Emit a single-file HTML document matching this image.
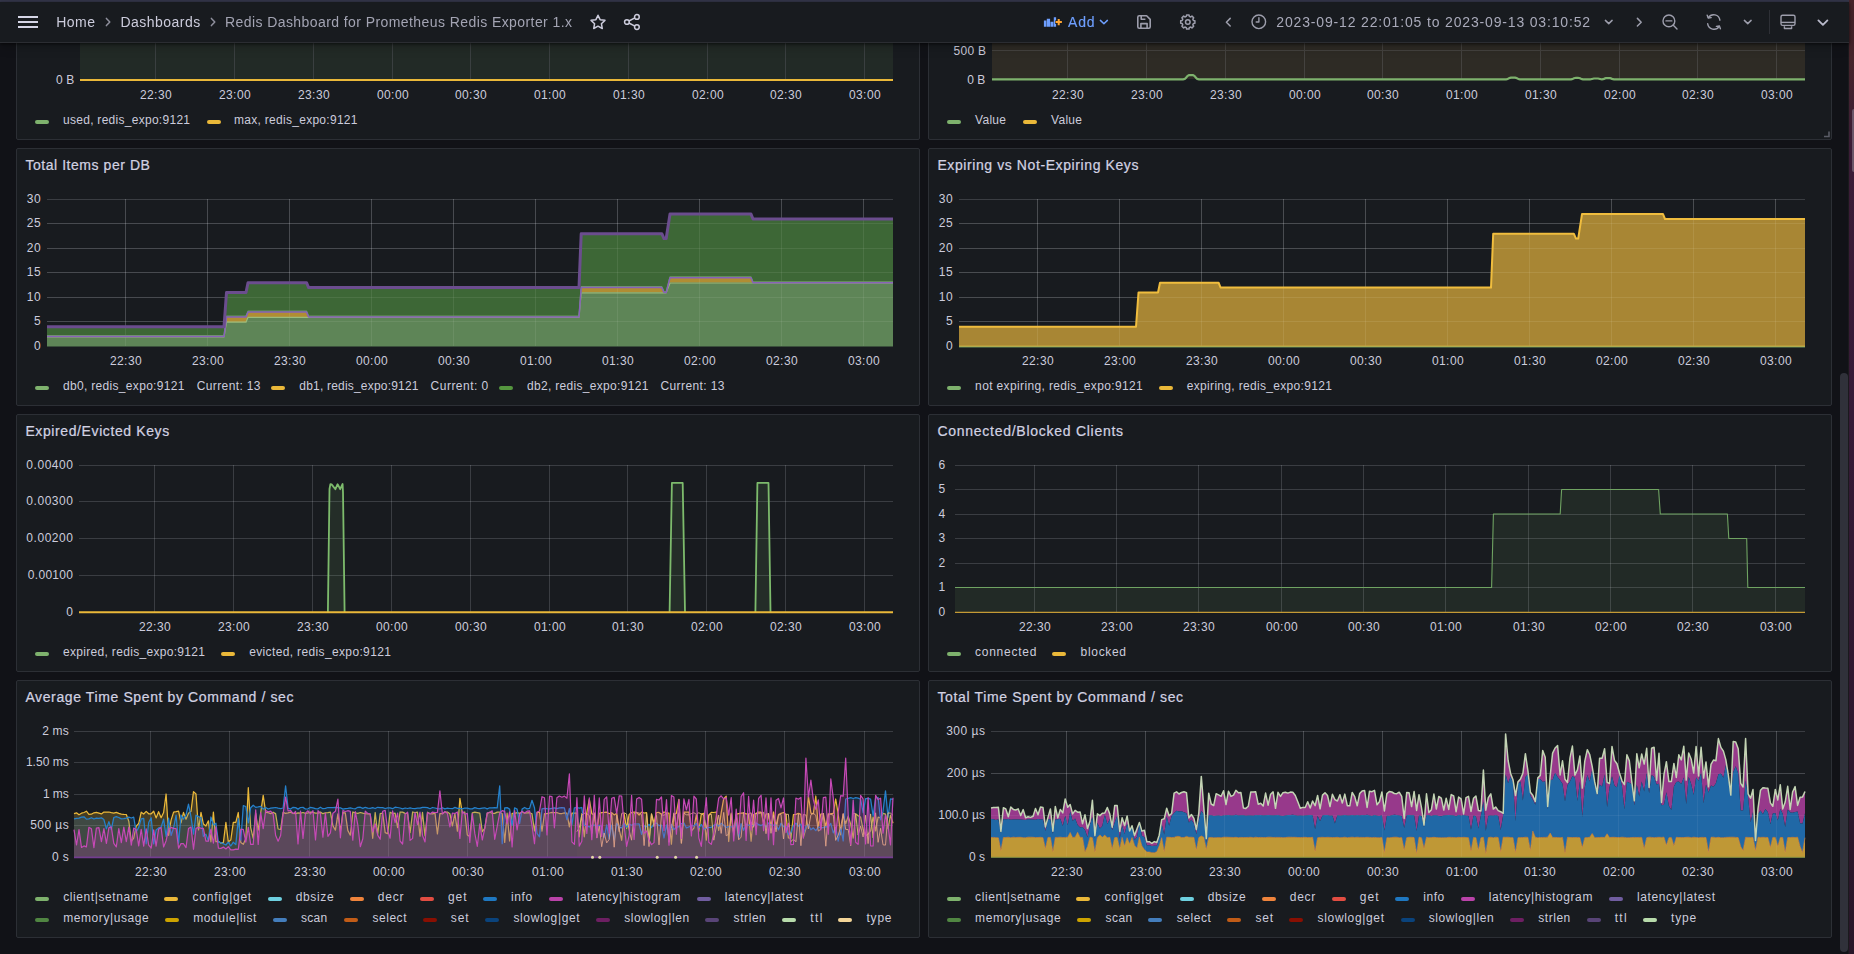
<!DOCTYPE html>
<html lang="en">
<head>
<meta charset="utf-8">
<title>Redis Dashboard for Prometheus Redis Exporter 1.x - Dashboards - Grafana</title>
<style>
html,body{margin:0;padding:0;}
body{width:1854px;height:954px;overflow:hidden;background:#111217;position:relative;
 font-family:"Liberation Sans",sans-serif;color:#ccccdc;}
.t{position:absolute;white-space:pre;font-family:"Liberation Sans",sans-serif;font-weight:400;}
.m{-webkit-text-stroke:0.22px currentColor;}
.m2{-webkit-text-stroke:0.15px currentColor;}
#wintop{position:absolute;left:0;top:0;width:1849px;height:2px;background:#34364a;}
#winright{position:absolute;left:1849px;top:0;width:5px;height:954px;
 background:linear-gradient(#46242a 0px,#45242b 60px,#3b1c37 150px,#351a36 420px,#281628 954px);}
#winline{position:absolute;left:1848px;top:43px;width:1px;height:911px;background:#1a1a1d;}
#winthumb{position:absolute;left:1851.5px;top:109px;width:3px;height:63px;border-radius:2px 0 0 2px;background:#6a5568;}
header{will-change:transform;position:absolute;left:0;top:2px;width:1849px;height:40px;background:#181b1f;border-bottom:1px solid #2b2d32;
 box-shadow:0 1px 3px rgba(0,0,0,.6),0 4px 10px rgba(0,0,0,.22);z-index:5;}
header svg{position:absolute;overflow:visible;}
main{background:#111217;position:absolute;left:0;top:43px;width:1849px;height:911px;overflow:hidden;}
.panel{position:absolute;box-sizing:border-box;width:904px;height:258px;background:#181b1f;border:1px solid #2c2f35;border-radius:2px;}
.panel>svg{position:absolute;left:-1px;top:-1px;width:904px;height:258px;}
.panel h2{margin:0;font-weight:400;}
.lg{position:absolute;height:4px;width:14px;border-radius:2px;}
#gscroll{position:absolute;left:1840px;top:330px;width:8px;height:579px;border-radius:4px;background:#30313a;}
</style>
</head>
<body>
<div id="wintop"></div>

<header>
<svg style="left:18px;top:14px" width="20" height="12" viewBox="0 0 20 12"><path d="M0 1h20M0 6h20M0 11h20" stroke="#d5d5e6" stroke-width="2" fill="none"/></svg>
<span class="t " style="left:56.20px;top:13.00px;font-size:14px;line-height:14px;letter-spacing:0.486px;color:#ccccdc;">Home</span>
<span class="t " style="left:120.40px;top:13.00px;font-size:14px;line-height:14px;letter-spacing:0.480px;color:#ccccdc;">Dashboards</span>
<span class="t " style="left:225.00px;top:13.00px;font-size:14px;line-height:14px;letter-spacing:0.421px;color:#a3a4b3;">Redis Dashboard for Prometheus Redis Exporter 1.x</span>
<svg style="left:105.5px;top:16.0px" width="4.2" height="8" viewBox="0 0 4.2 8"><path d="M0.4 0.4 L3.8000000000000003 4.0 L0.4 7.6" stroke="#8e8f9c" stroke-width="1.5" fill="none" stroke-linecap="round" stroke-linejoin="round"/></svg>
<svg style="left:211.1px;top:16.0px" width="4.2" height="8" viewBox="0 0 4.2 8"><path d="M0.4 0.4 L3.8000000000000003 4.0 L0.4 7.6" stroke="#8e8f9c" stroke-width="1.5" fill="none" stroke-linecap="round" stroke-linejoin="round"/></svg>
<svg style="left:588px;top:10px" width="20" height="20" viewBox="0 0 20 20"><path d="M10.00 3.30 L12.12 7.69 L16.94 8.34 L13.42 11.71 L14.29 16.51 L10.00 14.20 L5.71 16.51 L6.58 11.71 L3.06 8.34 L7.88 7.69Z" stroke="#ccccdc" stroke-width="1.5" fill="none" stroke-linejoin="round"/></svg>
<svg style="left:622px;top:10px" width="20" height="20" viewBox="0 0 20 20" fill="none" stroke="#ccccdc" stroke-width="1.5"><circle cx="4.9" cy="10" r="2.35"/><circle cx="14.9" cy="4.9" r="2.35"/><circle cx="14.9" cy="15.1" r="2.35"/><path d="M6.9 9 L12.9 5.9 M6.9 11 L12.9 14.1"/></svg>
<svg style="left:1043px;top:13px" width="20" height="14" viewBox="0 0 20 14"><path d="M0.9 5.5h2.5v6.3h-2.5z M3.8 3.8h3.3v8h-3.3z M7.5 6.7h2.9v5.1h-2.9z M10.8 2.2h2.3v9.6h-2.3z" fill="#6e9fff"/><path d="M15.7 3.4v7.4M12 7.1h7.4" stroke="#181b1f" stroke-width="3.4" fill="none"/><path d="M15.7 3.9v6.4M12.5 7.1h6.4" stroke="#ffa530" stroke-width="2" fill="none"/></svg>
<span class="t m2" style="left:1068.00px;top:13.00px;font-size:14px;line-height:14px;letter-spacing:0.845px;color:#6e9fff;">Add</span>
<svg style="left:1100.2px;top:17.8px" width="7.8" height="4.2" viewBox="0 0 7.8 4.2"><path d="M0.4 0.4 L3.9 3.8000000000000003 L7.3999999999999995 0.4" stroke="#6e9fff" stroke-width="1.5" fill="none" stroke-linecap="round" stroke-linejoin="round"/></svg>
<svg style="left:1136px;top:12px" width="16" height="16" viewBox="0 0 16 16" fill="none" stroke="#9d9eac" stroke-width="1.6" stroke-linejoin="round"><path d="M1.8 3.2 Q1.8 1.8 3.2 1.8 H10.6 L14.2 5.4 V12.8 Q14.2 14.2 12.8 14.2 H3.2 Q1.8 14.2 1.8 12.8 Z"/><path d="M4.9 14 V9.6 H11.1 V14"/><path d="M5.2 2 V5.3 H9.4"/></svg>
<svg style="left:1178px;top:10px" width="20" height="20" viewBox="0 0 20 20" fill="none" stroke="#9d9eac" stroke-width="1.5" stroke-linejoin="round"><path d="M8.31 4.39 L8.58 2.90 L11.02 2.90 L11.29 4.39 L12.71 4.98 L13.96 4.12 L15.68 5.84 L14.82 7.09 L15.41 8.51 L16.90 8.78 L16.90 11.22 L15.41 11.49 L14.82 12.91 L15.68 14.16 L13.96 15.88 L12.71 15.02 L11.29 15.61 L11.02 17.10 L8.58 17.10 L8.31 15.61 L6.89 15.02 L5.64 15.88 L3.92 14.16 L4.78 12.91 L4.19 11.49 L2.70 11.22 L2.70 8.78 L4.19 8.51 L4.78 7.09 L3.92 5.84 L5.64 4.12 L6.89 4.98Z"/><circle cx="9.8" cy="10" r="2.3"/></svg>
<svg style="left:1225.7px;top:15.6px" width="4.6" height="8.4" viewBox="0 0 4.6 8.4"><path d="M4.199999999999999 0.4 L0.4 4.2 L4.199999999999999 8.0" stroke="#9d9eac" stroke-width="1.5" fill="none" stroke-linecap="round" stroke-linejoin="round"/></svg>
<svg style="left:1249px;top:10px" width="20" height="20" viewBox="0 0 20 20" fill="none" stroke="#9d9eac" stroke-width="1.4" stroke-linecap="round" stroke-linejoin="round"><circle cx="9.8" cy="9.8" r="6.8"/><path d="M9.9 5.8 V10 H7.2"/></svg>
<span class="t " style="left:1276.30px;top:13.00px;font-size:14px;line-height:14px;letter-spacing:0.838px;color:#a9aaba;">2023-09-12 22:01:05 to 2023-09-13 03:10:52</span>
<svg style="left:1605.2px;top:18.0px" width="7.5" height="4" viewBox="0 0 7.5 4"><path d="M0.4 0.4 L3.75 3.6 L7.1 0.4" stroke="#9d9eac" stroke-width="1.5" fill="none" stroke-linecap="round" stroke-linejoin="round"/></svg>
<svg style="left:1636.5px;top:15.6px" width="4.6" height="8.4" viewBox="0 0 4.6 8.4"><path d="M0.4 0.4 L4.199999999999999 4.2 L0.4 8.0" stroke="#9d9eac" stroke-width="1.5" fill="none" stroke-linecap="round" stroke-linejoin="round"/></svg>
<svg style="left:1660px;top:10px" width="20" height="20" viewBox="0 0 20 20" fill="none" stroke="#9d9eac" stroke-width="1.4" stroke-linecap="round"><circle cx="8.9" cy="8.9" r="5.9"/><path d="M5.9 8.9 H11.9" stroke-width="1.2"/><path d="M13.3 13.3 L17 17"/></svg>
<svg style="left:1704px;top:10px" width="20" height="20" viewBox="0 0 20 20" fill="none" stroke="#9d9eac" stroke-width="1.4" stroke-linecap="round" stroke-linejoin="round"><path d="M15.9 8.2 A6.3 6.3 0 0 0 4.4 5.6 M3.7 11.8 A6.3 6.3 0 0 0 15.2 14.4"/><path d="M3.2 3.2 L4.2 6 L7.2 5.6 M16.4 16.8 L15.4 14 L12.4 14.4"/></svg>
<svg style="left:1744.2px;top:18.0px" width="7.5" height="4" viewBox="0 0 7.5 4"><path d="M0.4 0.4 L3.75 3.6 L7.1 0.4" stroke="#9d9eac" stroke-width="1.5" fill="none" stroke-linecap="round" stroke-linejoin="round"/></svg>
<div style="position:absolute;left:1769px;top:8px;width:1px;height:24px;background:#2e3036"></div>
<svg style="left:1778px;top:10px" width="20" height="20" viewBox="0 0 20 20" fill="none" stroke="#9d9eac" stroke-width="1.4" stroke-linejoin="round"><rect x="3" y="3.2" width="14" height="10.2" rx="1.6"/><path d="M3 10.4 H17"/><path d="M6.4 14.2 V16.5 H13.6 V14.2"/></svg>
<svg style="left:1818.1px;top:18.2px" width="9.8" height="5.3" viewBox="0 0 9.8 5.3"><path d="M0.4 0.4 L4.9 4.8999999999999995 L9.4 0.4" stroke="#b9bacb" stroke-width="1.8" fill="none" stroke-linecap="round" stroke-linejoin="round"/></svg>
</header>
<main>
<section class="panel" style="left:16px;top:-161px">
<span class="t " style="left:38.90px;top:191.00px;font-size:12px;line-height:12px;letter-spacing:0.194px;color:#ccccdc;">0 B</span>
<span class="t " style="left:122.90px;top:206.00px;font-size:12px;line-height:12px;letter-spacing:0.443px;color:#ccccdc;">22:30</span>
<span class="t " style="left:201.90px;top:206.00px;font-size:12px;line-height:12px;letter-spacing:0.443px;color:#ccccdc;">23:00</span>
<span class="t " style="left:280.90px;top:206.00px;font-size:12px;line-height:12px;letter-spacing:0.443px;color:#ccccdc;">23:30</span>
<span class="t " style="left:359.90px;top:206.00px;font-size:12px;line-height:12px;letter-spacing:0.443px;color:#ccccdc;">00:00</span>
<span class="t " style="left:437.90px;top:206.00px;font-size:12px;line-height:12px;letter-spacing:0.443px;color:#ccccdc;">00:30</span>
<span class="t " style="left:516.90px;top:206.00px;font-size:12px;line-height:12px;letter-spacing:0.443px;color:#ccccdc;">01:00</span>
<span class="t " style="left:595.90px;top:206.00px;font-size:12px;line-height:12px;letter-spacing:0.443px;color:#ccccdc;">01:30</span>
<span class="t " style="left:674.90px;top:206.00px;font-size:12px;line-height:12px;letter-spacing:0.443px;color:#ccccdc;">02:00</span>
<span class="t " style="left:752.90px;top:206.00px;font-size:12px;line-height:12px;letter-spacing:0.443px;color:#ccccdc;">02:30</span>
<span class="t " style="left:831.90px;top:206.00px;font-size:12px;line-height:12px;letter-spacing:0.443px;color:#ccccdc;">03:00</span>
<i class="lg" style="left:18.0px;top:237px;background:#7EB26D"></i>
<span class="t " style="left:46.00px;top:231.00px;font-size:12px;line-height:12px;letter-spacing:0.279px;color:#ccccdc;">used, redis_expo:9121</span>
<i class="lg" style="left:189.5px;top:237px;background:#EAB839"></i>
<span class="t " style="left:217.00px;top:231.00px;font-size:12px;line-height:12px;letter-spacing:0.286px;color:#ccccdc;">max, redis_expo:9121</span>
<svg viewBox="0 0 904 258" fill="none">
<rect x="64" y="158" width="813" height="40" fill="#222a26"/>
<path d="M139.5 158 V198" stroke="#3a3f40" stroke-width="1"/>
<path d="M218.5 158 V198" stroke="#3a3f40" stroke-width="1"/>
<path d="M297.5 158 V198" stroke="#3a3f40" stroke-width="1"/>
<path d="M376.5 158 V198" stroke="#3a3f40" stroke-width="1"/>
<path d="M454.5 158 V198" stroke="#3a3f40" stroke-width="1"/>
<path d="M533.5 158 V198" stroke="#3a3f40" stroke-width="1"/>
<path d="M612.5 158 V198" stroke="#3a3f40" stroke-width="1"/>
<path d="M691.5 158 V198" stroke="#3a3f40" stroke-width="1"/>
<path d="M769.5 158 V198" stroke="#3a3f40" stroke-width="1"/>
<path d="M848.5 158 V198" stroke="#3a3f40" stroke-width="1"/>
<path d="M64 198 H877" stroke="#EAB839" stroke-width="2"/>
</svg>
</section>
<section class="panel" style="left:928px;top:-161px">
<span class="t " style="left:24.60px;top:162.00px;font-size:12px;line-height:12px;letter-spacing:0.261px;color:#ccccdc;">500 B</span>
<span class="t " style="left:38.30px;top:191.00px;font-size:12px;line-height:12px;letter-spacing:-0.006px;color:#ccccdc;">0 B</span>
<span class="t " style="left:122.90px;top:206.00px;font-size:12px;line-height:12px;letter-spacing:0.443px;color:#ccccdc;">22:30</span>
<span class="t " style="left:201.90px;top:206.00px;font-size:12px;line-height:12px;letter-spacing:0.443px;color:#ccccdc;">23:00</span>
<span class="t " style="left:280.90px;top:206.00px;font-size:12px;line-height:12px;letter-spacing:0.443px;color:#ccccdc;">23:30</span>
<span class="t " style="left:359.90px;top:206.00px;font-size:12px;line-height:12px;letter-spacing:0.443px;color:#ccccdc;">00:00</span>
<span class="t " style="left:437.90px;top:206.00px;font-size:12px;line-height:12px;letter-spacing:0.443px;color:#ccccdc;">00:30</span>
<span class="t " style="left:516.90px;top:206.00px;font-size:12px;line-height:12px;letter-spacing:0.443px;color:#ccccdc;">01:00</span>
<span class="t " style="left:595.90px;top:206.00px;font-size:12px;line-height:12px;letter-spacing:0.443px;color:#ccccdc;">01:30</span>
<span class="t " style="left:674.90px;top:206.00px;font-size:12px;line-height:12px;letter-spacing:0.443px;color:#ccccdc;">02:00</span>
<span class="t " style="left:752.90px;top:206.00px;font-size:12px;line-height:12px;letter-spacing:0.443px;color:#ccccdc;">02:30</span>
<span class="t " style="left:831.90px;top:206.00px;font-size:12px;line-height:12px;letter-spacing:0.443px;color:#ccccdc;">03:00</span>
<i class="lg" style="left:18.0px;top:237px;background:#7EB26D"></i>
<span class="t " style="left:46.00px;top:231.00px;font-size:12px;line-height:12px;letter-spacing:0.300px;color:#ccccdc;">Value</span>
<i class="lg" style="left:94.0px;top:237px;background:#EAB839"></i>
<span class="t " style="left:122.00px;top:231.00px;font-size:12px;line-height:12px;letter-spacing:0.300px;color:#ccccdc;">Value</span>
<svg viewBox="0 0 904 258" fill="none">
<rect x="64" y="158" width="813" height="39" fill="#2e2b25"/>
<path d="M139.5 158 V197" stroke="#44423f" stroke-width="1"/>
<path d="M218.5 158 V197" stroke="#44423f" stroke-width="1"/>
<path d="M297.5 158 V197" stroke="#44423f" stroke-width="1"/>
<path d="M376.5 158 V197" stroke="#44423f" stroke-width="1"/>
<path d="M454.5 158 V197" stroke="#44423f" stroke-width="1"/>
<path d="M533.5 158 V197" stroke="#44423f" stroke-width="1"/>
<path d="M612.5 158 V197" stroke="#44423f" stroke-width="1"/>
<path d="M691.5 158 V197" stroke="#44423f" stroke-width="1"/>
<path d="M769.5 158 V197" stroke="#44423f" stroke-width="1"/>
<path d="M848.5 158 V197" stroke="#44423f" stroke-width="1"/>
<path d="M64 168.5 H877" stroke="#44423f" stroke-width="1"/>
<polyline points="64.0,197.3 65.0,197.3 66.0,197.3 67.0,197.3 68.0,197.3 69.0,197.3 70.0,197.3 71.0,197.3 72.0,197.3 73.0,197.3 74.0,197.3 75.0,197.3 76.0,197.3 77.0,197.3 78.0,197.3 79.0,197.3 80.0,197.3 81.0,197.3 82.0,197.3 83.0,197.3 84.0,197.3 85.0,197.3 86.0,197.3 87.0,197.3 88.0,197.3 89.0,197.3 90.0,197.3 91.0,197.3 92.0,197.3 93.0,197.3 94.0,197.3 95.0,197.3 96.0,197.3 97.0,197.3 98.0,197.3 99.0,197.3 100.0,197.3 101.0,197.3 102.0,197.3 103.0,197.3 104.0,197.3 105.0,197.3 106.0,197.3 107.0,197.3 108.0,197.3 109.0,197.3 110.0,197.3 111.0,197.3 112.0,197.3 113.0,197.3 114.0,197.3 115.0,197.3 116.0,197.3 117.0,197.3 118.0,197.3 119.0,197.3 120.0,197.3 121.0,197.3 122.0,197.3 123.0,197.3 124.0,197.3 125.0,197.3 126.0,197.3 127.0,197.3 128.0,197.3 129.0,197.3 130.0,197.3 131.0,197.3 132.0,197.3 133.0,197.3 134.0,197.3 135.0,197.3 136.0,197.3 137.0,197.3 138.0,197.3 139.0,197.3 140.0,197.3 141.0,197.3 142.0,197.3 143.0,197.3 144.0,197.3 145.0,197.3 146.0,197.3 147.0,197.3 148.0,197.3 149.0,197.3 150.0,197.3 151.0,197.3 152.0,197.3 153.0,197.3 154.0,197.3 155.0,197.3 156.0,197.3 157.0,197.3 158.0,197.3 159.0,197.3 160.0,197.3 161.0,197.3 162.0,197.3 163.0,197.3 164.0,197.3 165.0,197.3 166.0,197.3 167.0,197.3 168.0,197.3 169.0,197.3 170.0,197.3 171.0,197.3 172.0,197.3 173.0,197.3 174.0,197.3 175.0,197.3 176.0,197.3 177.0,197.3 178.0,197.3 179.0,197.3 180.0,197.3 181.0,197.3 182.0,197.3 183.0,197.3 184.0,197.3 185.0,197.3 186.0,197.3 187.0,197.3 188.0,197.3 189.0,197.3 190.0,197.3 191.0,197.3 192.0,197.3 193.0,197.3 194.0,197.3 195.0,197.3 196.0,197.3 197.0,197.3 198.0,197.3 199.0,197.3 200.0,197.3 201.0,197.3 202.0,197.3 203.0,197.3 204.0,197.3 205.0,197.3 206.0,197.3 207.0,197.3 208.0,197.3 209.0,197.3 210.0,197.3 211.0,197.3 212.0,197.3 213.0,197.3 214.0,197.3 215.0,197.3 216.0,197.3 217.0,197.3 218.0,197.3 219.0,197.3 220.0,197.3 221.0,197.3 222.0,197.3 223.0,197.3 224.0,197.3 225.0,197.3 226.0,197.3 227.0,197.3 228.0,197.3 229.0,197.3 230.0,197.3 231.0,197.3 232.0,197.3 233.0,197.3 234.0,197.3 235.0,197.3 236.0,197.3 237.0,197.3 238.0,197.3 239.0,197.3 240.0,197.3 241.0,197.3 242.0,197.3 243.0,197.3 244.0,197.3 245.0,197.3 246.0,197.3 247.0,197.3 248.0,197.3 249.0,197.3 250.0,197.3 251.0,197.3 252.0,197.3 253.0,197.3 254.0,197.3 255.0,197.3 256.0,197.2 257.0,196.8 258.0,195.8 259.0,194.5 260.0,193.6 261.0,193.2 262.0,193.1 263.0,193.1 264.0,193.1 265.0,193.2 266.0,193.6 267.0,194.5 268.0,195.8 269.0,196.8 270.0,197.2 271.0,197.3 272.0,197.3 273.0,197.3 274.0,197.3 275.0,197.3 276.0,197.3 277.0,197.3 278.0,197.3 279.0,197.3 280.0,197.3 281.0,197.3 282.0,197.3 283.0,197.3 284.0,197.3 285.0,197.3 286.0,197.3 287.0,197.3 288.0,197.3 289.0,197.3 290.0,197.3 291.0,197.3 292.0,197.3 293.0,197.3 294.0,197.3 295.0,197.3 296.0,197.3 297.0,197.3 298.0,197.3 299.0,197.3 300.0,197.3 301.0,197.3 302.0,197.3 303.0,197.3 304.0,197.3 305.0,197.3 306.0,197.3 307.0,197.3 308.0,197.3 309.0,197.3 310.0,197.3 311.0,197.3 312.0,197.3 313.0,197.3 314.0,197.3 315.0,197.3 316.0,197.3 317.0,197.3 318.0,197.3 319.0,197.3 320.0,197.3 321.0,197.3 322.0,197.3 323.0,197.3 324.0,197.3 325.0,197.3 326.0,197.3 327.0,197.3 328.0,197.3 329.0,197.3 330.0,197.3 331.0,197.3 332.0,197.3 333.0,197.3 334.0,197.3 335.0,197.3 336.0,197.3 337.0,197.3 338.0,197.3 339.0,197.3 340.0,197.3 341.0,197.3 342.0,197.3 343.0,197.3 344.0,197.3 345.0,197.3 346.0,197.3 347.0,197.3 348.0,197.3 349.0,197.3 350.0,197.3 351.0,197.3 352.0,197.3 353.0,197.3 354.0,197.3 355.0,197.3 356.0,197.3 357.0,197.3 358.0,197.3 359.0,197.3 360.0,197.3 361.0,197.3 362.0,197.3 363.0,197.3 364.0,197.3 365.0,197.3 366.0,197.3 367.0,197.3 368.0,197.3 369.0,197.3 370.0,197.3 371.0,197.3 372.0,197.3 373.0,197.3 374.0,197.3 375.0,197.3 376.0,197.3 377.0,197.3 378.0,197.3 379.0,197.3 380.0,197.3 381.0,197.3 382.0,197.3 383.0,197.3 384.0,197.3 385.0,197.3 386.0,197.3 387.0,197.3 388.0,197.3 389.0,197.3 390.0,197.3 391.0,197.3 392.0,197.3 393.0,197.3 394.0,197.3 395.0,197.3 396.0,197.3 397.0,197.3 398.0,197.3 399.0,197.3 400.0,197.3 401.0,197.3 402.0,197.3 403.0,197.3 404.0,197.3 405.0,197.3 406.0,197.3 407.0,197.3 408.0,197.3 409.0,197.3 410.0,197.3 411.0,197.3 412.0,197.3 413.0,197.3 414.0,197.3 415.0,197.3 416.0,197.3 417.0,197.3 418.0,197.3 419.0,197.3 420.0,197.3 421.0,197.3 422.0,197.3 423.0,197.3 424.0,197.3 425.0,197.3 426.0,197.3 427.0,197.3 428.0,197.3 429.0,197.3 430.0,197.3 431.0,197.3 432.0,197.3 433.0,197.3 434.0,197.3 435.0,197.3 436.0,197.3 437.0,197.3 438.0,197.3 439.0,197.3 440.0,197.3 441.0,197.3 442.0,197.3 443.0,197.3 444.0,197.3 445.0,197.3 446.0,197.3 447.0,197.3 448.0,197.3 449.0,197.3 450.0,197.3 451.0,197.3 452.0,197.3 453.0,197.3 454.0,197.3 455.0,197.3 456.0,197.3 457.0,197.3 458.0,197.3 459.0,197.3 460.0,197.3 461.0,197.3 462.0,197.3 463.0,197.3 464.0,197.3 465.0,197.3 466.0,197.3 467.0,197.3 468.0,197.3 469.0,197.3 470.0,197.3 471.0,197.3 472.0,197.3 473.0,197.3 474.0,197.3 475.0,197.3 476.0,197.3 477.0,197.3 478.0,197.3 479.0,197.3 480.0,197.3 481.0,197.3 482.0,197.3 483.0,197.3 484.0,197.3 485.0,197.3 486.0,197.3 487.0,197.3 488.0,197.3 489.0,197.3 490.0,197.3 491.0,197.3 492.0,197.3 493.0,197.3 494.0,197.3 495.0,197.3 496.0,197.3 497.0,197.3 498.0,197.3 499.0,197.3 500.0,197.3 501.0,197.3 502.0,197.3 503.0,197.3 504.0,197.3 505.0,197.3 506.0,197.3 507.0,197.3 508.0,197.3 509.0,197.3 510.0,197.3 511.0,197.3 512.0,197.3 513.0,197.3 514.0,197.3 515.0,197.3 516.0,197.3 517.0,197.3 518.0,197.3 519.0,197.3 520.0,197.3 521.0,197.3 522.0,197.3 523.0,197.3 524.0,197.3 525.0,197.3 526.0,197.3 527.0,197.3 528.0,197.3 529.0,197.3 530.0,197.3 531.0,197.3 532.0,197.3 533.0,197.3 534.0,197.3 535.0,197.3 536.0,197.3 537.0,197.3 538.0,197.3 539.0,197.3 540.0,197.3 541.0,197.3 542.0,197.3 543.0,197.3 544.0,197.3 545.0,197.3 546.0,197.3 547.0,197.3 548.0,197.3 549.0,197.3 550.0,197.3 551.0,197.3 552.0,197.3 553.0,197.3 554.0,197.3 555.0,197.3 556.0,197.3 557.0,197.3 558.0,197.3 559.0,197.3 560.0,197.3 561.0,197.3 562.0,197.3 563.0,197.3 564.0,197.3 565.0,197.3 566.0,197.3 567.0,197.3 568.0,197.3 569.0,197.3 570.0,197.3 571.0,197.3 572.0,197.3 573.0,197.3 574.0,197.3 575.0,197.3 576.0,197.3 577.0,197.3 578.0,197.3 579.0,197.1 580.0,196.7 581.0,196.2 582.0,195.9 583.0,195.7 584.0,195.7 585.0,195.7 586.0,195.7 587.0,195.7 588.0,195.9 589.0,196.2 590.0,196.7 591.0,197.1 592.0,197.3 593.0,197.3 594.0,197.3 595.0,197.3 596.0,197.3 597.0,197.3 598.0,197.3 599.0,197.3 600.0,197.3 601.0,197.3 602.0,197.3 603.0,197.3 604.0,197.3 605.0,197.3 606.0,197.3 607.0,197.3 608.0,197.3 609.0,197.3 610.0,197.3 611.0,197.3 612.0,197.3 613.0,197.3 614.0,197.3 615.0,197.3 616.0,197.3 617.0,197.3 618.0,197.3 619.0,197.3 620.0,197.3 621.0,197.3 622.0,197.3 623.0,197.3 624.0,197.3 625.0,197.3 626.0,197.3 627.0,197.3 628.0,197.3 629.0,197.3 630.0,197.3 631.0,197.3 632.0,197.3 633.0,197.3 634.0,197.3 635.0,197.3 636.0,197.3 637.0,197.3 638.0,197.3 639.0,197.3 640.0,197.3 641.0,197.3 642.0,197.3 643.0,197.3 644.0,197.2 645.0,196.8 646.0,196.3 647.0,196.0 648.0,195.9 649.0,195.9 650.0,195.9 651.0,196.0 652.0,196.3 653.0,196.8 654.0,197.2 655.0,197.3 656.0,197.3 657.0,197.3 658.0,197.3 659.0,197.3 660.0,197.3 661.0,197.3 662.0,197.3 663.0,197.2 664.0,197.0 665.0,196.7 666.0,196.5 667.0,196.5 668.0,196.5 669.0,196.5 670.0,196.5 671.0,196.7 672.0,197.0 673.0,197.2 674.0,197.3 675.0,197.2 676.0,196.9 677.0,196.4 678.0,196.2 679.0,196.1 680.0,196.1 681.0,196.1 682.0,196.2 683.0,196.4 684.0,196.9 685.0,197.2 686.0,197.3 687.0,197.3 688.0,197.3 689.0,197.3 690.0,197.3 691.0,197.3 692.0,197.3 693.0,197.3 694.0,197.3 695.0,197.3 696.0,197.3 697.0,197.3 698.0,197.3 699.0,197.3 700.0,197.3 701.0,197.3 702.0,197.3 703.0,197.3 704.0,197.3 705.0,197.3 706.0,197.3 707.0,197.3 708.0,197.3 709.0,197.3 710.0,197.3 711.0,197.3 712.0,197.3 713.0,197.3 714.0,197.3 715.0,197.3 716.0,197.3 717.0,197.3 718.0,197.3 719.0,197.3 720.0,197.3 721.0,197.3 722.0,197.3 723.0,197.3 724.0,197.3 725.0,197.3 726.0,197.3 727.0,197.3 728.0,197.3 729.0,197.3 730.0,197.3 731.0,197.3 732.0,197.3 733.0,197.3 734.0,197.3 735.0,197.3 736.0,197.3 737.0,197.3 738.0,197.3 739.0,197.3 740.0,197.3 741.0,197.3 742.0,197.3 743.0,197.3 744.0,197.3 745.0,197.3 746.0,197.3 747.0,197.3 748.0,197.3 749.0,197.3 750.0,197.3 751.0,197.3 752.0,197.3 753.0,197.3 754.0,197.3 755.0,197.3 756.0,197.3 757.0,197.3 758.0,197.3 759.0,197.3 760.0,197.3 761.0,197.3 762.0,197.3 763.0,197.3 764.0,197.3 765.0,197.3 766.0,197.3 767.0,197.3 768.0,197.3 769.0,197.3 770.0,197.3 771.0,197.3 772.0,197.3 773.0,197.3 774.0,197.3 775.0,197.3 776.0,197.3 777.0,197.3 778.0,197.3 779.0,197.3 780.0,197.3 781.0,197.3 782.0,197.3 783.0,197.3 784.0,197.3 785.0,197.3 786.0,197.3 787.0,197.3 788.0,197.3 789.0,197.3 790.0,197.3 791.0,197.3 792.0,197.3 793.0,197.3 794.0,197.3 795.0,197.3 796.0,197.3 797.0,197.3 798.0,197.3 799.0,197.3 800.0,197.3 801.0,197.3 802.0,197.3 803.0,197.3 804.0,197.3 805.0,197.3 806.0,197.3 807.0,197.3 808.0,197.3 809.0,197.3 810.0,197.3 811.0,197.3 812.0,197.3 813.0,197.3 814.0,197.3 815.0,197.3 816.0,197.3 817.0,197.3 818.0,197.3 819.0,197.3 820.0,197.3 821.0,197.3 822.0,197.3 823.0,197.3 824.0,197.3 825.0,197.3 826.0,197.3 827.0,197.3 828.0,197.3 829.0,197.3 830.0,197.3 831.0,197.3 832.0,197.3 833.0,197.3 834.0,197.3 835.0,197.3 836.0,197.3 837.0,197.3 838.0,197.3 839.0,197.3 840.0,197.3 841.0,197.3 842.0,197.3 843.0,197.3 844.0,197.3 845.0,197.3 846.0,197.3 847.0,197.3 848.0,197.3 849.0,197.3 850.0,197.3 851.0,197.3 852.0,197.3 853.0,197.3 854.0,197.3 855.0,197.3 856.0,197.3 857.0,197.3 858.0,197.3 859.0,197.3 860.0,197.3 861.0,197.3 862.0,197.3 863.0,197.3 864.0,197.3 865.0,197.3 866.0,197.3 867.0,197.3 868.0,197.3 869.0,197.3 870.0,197.3 871.0,197.3 872.0,197.3 873.0,197.3 874.0,197.3 875.0,197.3 876.0,197.3 877.0,197.3" stroke="#7EB26D" stroke-width="2.2"/>
<path d="M901 249.5 V254.5 H896" stroke="#5a5c66" stroke-width="1.6"/>
</svg>
</section>
<section class="panel" style="left:16px;top:105px">
<span class="t " style="left:9.80px;top:44.00px;font-size:12px;line-height:12px;letter-spacing:0.450px;color:#ccccdc;">30</span>
<span class="t " style="left:9.80px;top:68.00px;font-size:12px;line-height:12px;letter-spacing:0.450px;color:#ccccdc;">25</span>
<span class="t " style="left:9.80px;top:93.00px;font-size:12px;line-height:12px;letter-spacing:0.450px;color:#ccccdc;">20</span>
<span class="t " style="left:9.80px;top:117.00px;font-size:12px;line-height:12px;letter-spacing:0.450px;color:#ccccdc;">15</span>
<span class="t " style="left:9.80px;top:142.00px;font-size:12px;line-height:12px;letter-spacing:0.450px;color:#ccccdc;">10</span>
<span class="t " style="left:16.93px;top:166.00px;font-size:12px;line-height:12px;letter-spacing:0.450px;color:#ccccdc;">5</span>
<span class="t " style="left:16.93px;top:191.00px;font-size:12px;line-height:12px;letter-spacing:0.450px;color:#ccccdc;">0</span>
<span class="t " style="left:92.90px;top:206.00px;font-size:12px;line-height:12px;letter-spacing:0.443px;color:#ccccdc;">22:30</span>
<span class="t " style="left:174.90px;top:206.00px;font-size:12px;line-height:12px;letter-spacing:0.443px;color:#ccccdc;">23:00</span>
<span class="t " style="left:256.90px;top:206.00px;font-size:12px;line-height:12px;letter-spacing:0.443px;color:#ccccdc;">23:30</span>
<span class="t " style="left:338.90px;top:206.00px;font-size:12px;line-height:12px;letter-spacing:0.443px;color:#ccccdc;">00:00</span>
<span class="t " style="left:420.90px;top:206.00px;font-size:12px;line-height:12px;letter-spacing:0.443px;color:#ccccdc;">00:30</span>
<span class="t " style="left:502.90px;top:206.00px;font-size:12px;line-height:12px;letter-spacing:0.443px;color:#ccccdc;">01:00</span>
<span class="t " style="left:584.90px;top:206.00px;font-size:12px;line-height:12px;letter-spacing:0.443px;color:#ccccdc;">01:30</span>
<span class="t " style="left:666.90px;top:206.00px;font-size:12px;line-height:12px;letter-spacing:0.443px;color:#ccccdc;">02:00</span>
<span class="t " style="left:748.90px;top:206.00px;font-size:12px;line-height:12px;letter-spacing:0.443px;color:#ccccdc;">02:30</span>
<span class="t " style="left:830.90px;top:206.00px;font-size:12px;line-height:12px;letter-spacing:0.443px;color:#ccccdc;">03:00</span>
<i class="lg" style="left:18.0px;top:237px;background:#7EB26D"></i>
<span class="t " style="left:46.00px;top:231.00px;font-size:12px;line-height:12px;letter-spacing:0.315px;color:#ccccdc;">db0, redis_expo:9121</span>
<i class="lg" style="left:254.0px;top:237px;background:#EAB839"></i>
<span class="t " style="left:282.30px;top:231.00px;font-size:12px;line-height:12px;letter-spacing:0.199px;color:#ccccdc;">db1, redis_expo:9121</span>
<i class="lg" style="left:482.0px;top:237px;background:#55963f"></i>
<span class="t " style="left:510.10px;top:231.00px;font-size:12px;line-height:12px;letter-spacing:0.305px;color:#ccccdc;">db2, redis_expo:9121</span>
<span class="t " style="left:179.80px;top:231.00px;font-size:12px;line-height:12px;letter-spacing:0.368px;color:#ccccdc;">Current: 13</span>
<span class="t " style="left:413.60px;top:231.00px;font-size:12px;line-height:12px;letter-spacing:0.483px;color:#ccccdc;">Current: 0</span>
<span class="t " style="left:643.50px;top:231.00px;font-size:12px;line-height:12px;letter-spacing:0.388px;color:#ccccdc;">Current: 13</span>
<h2>
<span class="t m" style="left:8.40px;top:9.00px;font-size:14px;line-height:14px;letter-spacing:0.550px;color:#d2d2e2;">Total Items per DB</span>
</h2>
<svg viewBox="0 0 904 258" fill="none">
<path d="M31.0 51.5 H877.0" stroke="#f0faff" stroke-opacity="0.155" stroke-width="1"/>
<path d="M31.0 75.5 H877.0" stroke="#f0faff" stroke-opacity="0.155" stroke-width="1"/>
<path d="M31.0 100.5 H877.0" stroke="#f0faff" stroke-opacity="0.155" stroke-width="1"/>
<path d="M31.0 124.5 H877.0" stroke="#f0faff" stroke-opacity="0.155" stroke-width="1"/>
<path d="M31.0 149.5 H877.0" stroke="#f0faff" stroke-opacity="0.155" stroke-width="1"/>
<path d="M31.0 173.5 H877.0" stroke="#f0faff" stroke-opacity="0.155" stroke-width="1"/>
<path d="M109.5 51.0 V198.0" stroke="#f0faff" stroke-opacity="0.155" stroke-width="1"/>
<path d="M191.5 51.0 V198.0" stroke="#f0faff" stroke-opacity="0.155" stroke-width="1"/>
<path d="M273.5 51.0 V198.0" stroke="#f0faff" stroke-opacity="0.155" stroke-width="1"/>
<path d="M355.5 51.0 V198.0" stroke="#f0faff" stroke-opacity="0.155" stroke-width="1"/>
<path d="M437.5 51.0 V198.0" stroke="#f0faff" stroke-opacity="0.155" stroke-width="1"/>
<path d="M519.5 51.0 V198.0" stroke="#f0faff" stroke-opacity="0.155" stroke-width="1"/>
<path d="M601.5 51.0 V198.0" stroke="#f0faff" stroke-opacity="0.155" stroke-width="1"/>
<path d="M683.5 51.0 V198.0" stroke="#f0faff" stroke-opacity="0.155" stroke-width="1"/>
<path d="M765.5 51.0 V198.0" stroke="#f0faff" stroke-opacity="0.155" stroke-width="1"/>
<path d="M847.5 51.0 V198.0" stroke="#f0faff" stroke-opacity="0.155" stroke-width="1"/>
<polygon points="31.0,178.8 208.0,178.8 210.5,144.5 230.0,144.5 232.0,134.7 290.6,134.7 292.6,139.6 563.0,139.6 565.2,85.7 645.8,85.7 648.0,90.6 650.2,90.6 654.0,66.1 735.0,66.1 737.0,71.0 877.0,71.0 877.0,134.7 737.0,134.7 735.0,129.8 654.0,129.8 650.2,144.5 648.0,144.5 645.8,139.6 565.2,139.6 563.0,169.0 292.6,169.0 290.6,164.1 232.0,164.1 230.0,169.0 210.5,169.0 208.0,188.6 31.0,188.6" fill="#3f6a37" fill-opacity="0.97"/>
<polygon points="31.0,188.6 208.0,188.6 210.5,169.0 230.0,169.0 232.0,164.1 290.6,164.1 292.6,169.0 563.0,169.0 565.2,139.6 645.8,139.6 648.0,144.5 650.2,144.5 654.0,129.8 735.0,129.8 737.0,134.7 877.0,134.7 877.0,134.7 737.0,134.7 735.0,134.7 654.0,134.7 650.2,144.5 648.0,144.5 645.8,144.5 565.2,144.5 563.0,169.0 292.6,169.0 290.6,169.0 232.0,169.0 230.0,173.9 210.5,173.9 208.0,188.6 31.0,188.6" fill="#b08d33"/>
<polygon points="31.0,188.6 208.0,188.6 210.5,173.9 230.0,173.9 232.0,169.0 290.6,169.0 292.6,169.0 563.0,169.0 565.2,144.5 645.8,144.5 648.0,144.5 650.2,144.5 654.0,134.7 735.0,134.7 737.0,134.7 877.0,134.7 877.0,198.5 31.0,198.5" fill="#61895a" fill-opacity="0.96"/>
<path d="M31.0 75.5 H877.0" stroke="#ffffff" stroke-opacity="0.07"/>
<path d="M31.0 100.5 H877.0" stroke="#ffffff" stroke-opacity="0.07"/>
<path d="M31.0 124.5 H877.0" stroke="#ffffff" stroke-opacity="0.07"/>
<path d="M31.0 149.5 H877.0" stroke="#ffffff" stroke-opacity="0.07"/>
<path d="M31.0 173.5 H877.0" stroke="#ffffff" stroke-opacity="0.07"/>
<path d="M109.5 51.0 V198.0" stroke="#ffffff" stroke-opacity="0.07"/>
<path d="M191.5 51.0 V198.0" stroke="#ffffff" stroke-opacity="0.07"/>
<path d="M273.5 51.0 V198.0" stroke="#ffffff" stroke-opacity="0.07"/>
<path d="M355.5 51.0 V198.0" stroke="#ffffff" stroke-opacity="0.07"/>
<path d="M437.5 51.0 V198.0" stroke="#ffffff" stroke-opacity="0.07"/>
<path d="M519.5 51.0 V198.0" stroke="#ffffff" stroke-opacity="0.07"/>
<path d="M601.5 51.0 V198.0" stroke="#ffffff" stroke-opacity="0.07"/>
<path d="M683.5 51.0 V198.0" stroke="#ffffff" stroke-opacity="0.07"/>
<path d="M765.5 51.0 V198.0" stroke="#ffffff" stroke-opacity="0.07"/>
<path d="M847.5 51.0 V198.0" stroke="#ffffff" stroke-opacity="0.07"/>
<polyline points="31.0,188.9 208.0,188.9 210.5,174.2 230.0,174.2 232.0,169.3 290.6,169.3 292.6,169.3 563.0,169.3 565.2,144.8 645.8,144.8 648.0,144.8 650.2,144.8 654.0,135.0 735.0,135.0 737.0,135.0 877.0,135.0" stroke="#9dbb7a" stroke-width="1.2" stroke-linejoin="round"/>
<polyline points="31.0,187.7 208.0,187.7 210.5,168.1 230.0,168.1 232.0,163.2 290.6,163.2 292.6,168.1 563.0,168.1 565.2,138.7 645.8,138.7 648.0,143.6 650.2,143.6 654.0,128.9 735.0,128.9 737.0,133.8 877.0,133.8" stroke="#6f9a66" stroke-width="1.2" stroke-linejoin="round"/>
<polyline points="31.0,188.6 208.0,188.6 210.5,169.0 230.0,169.0 232.0,164.1 290.6,164.1 292.6,169.0 563.0,169.0 565.2,139.6 645.8,139.6 648.0,144.5 650.2,144.5 654.0,129.8 735.0,129.8 737.0,134.7 877.0,134.7" stroke="#8762b8" stroke-width="1.5" stroke-linejoin="round"/>
<polyline points="31.0,178.8 208.0,178.8 210.5,144.5 230.0,144.5 232.0,134.7 290.6,134.7 292.6,139.6 563.0,139.6 565.2,85.7 645.8,85.7 648.0,90.6 650.2,90.6 654.0,66.1 735.0,66.1 737.0,71.0 877.0,71.0" stroke="#6b4d8e" stroke-width="3" stroke-linejoin="round"/>
</svg>
</section>
<section class="panel" style="left:928px;top:105px">
<span class="t " style="left:9.80px;top:44.00px;font-size:12px;line-height:12px;letter-spacing:0.450px;color:#ccccdc;">30</span>
<span class="t " style="left:9.80px;top:68.00px;font-size:12px;line-height:12px;letter-spacing:0.450px;color:#ccccdc;">25</span>
<span class="t " style="left:9.80px;top:93.00px;font-size:12px;line-height:12px;letter-spacing:0.450px;color:#ccccdc;">20</span>
<span class="t " style="left:9.80px;top:117.00px;font-size:12px;line-height:12px;letter-spacing:0.450px;color:#ccccdc;">15</span>
<span class="t " style="left:9.80px;top:142.00px;font-size:12px;line-height:12px;letter-spacing:0.450px;color:#ccccdc;">10</span>
<span class="t " style="left:16.93px;top:166.00px;font-size:12px;line-height:12px;letter-spacing:0.450px;color:#ccccdc;">5</span>
<span class="t " style="left:16.93px;top:191.00px;font-size:12px;line-height:12px;letter-spacing:0.450px;color:#ccccdc;">0</span>
<span class="t " style="left:92.90px;top:206.00px;font-size:12px;line-height:12px;letter-spacing:0.443px;color:#ccccdc;">22:30</span>
<span class="t " style="left:174.90px;top:206.00px;font-size:12px;line-height:12px;letter-spacing:0.443px;color:#ccccdc;">23:00</span>
<span class="t " style="left:256.90px;top:206.00px;font-size:12px;line-height:12px;letter-spacing:0.443px;color:#ccccdc;">23:30</span>
<span class="t " style="left:338.90px;top:206.00px;font-size:12px;line-height:12px;letter-spacing:0.443px;color:#ccccdc;">00:00</span>
<span class="t " style="left:420.90px;top:206.00px;font-size:12px;line-height:12px;letter-spacing:0.443px;color:#ccccdc;">00:30</span>
<span class="t " style="left:502.90px;top:206.00px;font-size:12px;line-height:12px;letter-spacing:0.443px;color:#ccccdc;">01:00</span>
<span class="t " style="left:584.90px;top:206.00px;font-size:12px;line-height:12px;letter-spacing:0.443px;color:#ccccdc;">01:30</span>
<span class="t " style="left:666.90px;top:206.00px;font-size:12px;line-height:12px;letter-spacing:0.443px;color:#ccccdc;">02:00</span>
<span class="t " style="left:748.90px;top:206.00px;font-size:12px;line-height:12px;letter-spacing:0.443px;color:#ccccdc;">02:30</span>
<span class="t " style="left:830.90px;top:206.00px;font-size:12px;line-height:12px;letter-spacing:0.443px;color:#ccccdc;">03:00</span>
<i class="lg" style="left:18.0px;top:237px;background:#7EB26D"></i>
<span class="t " style="left:46.10px;top:231.00px;font-size:12px;line-height:12px;letter-spacing:0.363px;color:#ccccdc;">not expiring, redis_expo:9121</span>
<i class="lg" style="left:230.0px;top:237px;background:#EAB839"></i>
<span class="t " style="left:257.80px;top:231.00px;font-size:12px;line-height:12px;letter-spacing:0.316px;color:#ccccdc;">expiring, redis_expo:9121</span>
<h2>
<span class="t m" style="left:8.40px;top:9.00px;font-size:14px;line-height:14px;letter-spacing:0.593px;color:#d2d2e2;">Expiring vs Not-Expiring Keys</span>
</h2>
<svg viewBox="0 0 904 258" fill="none">
<path d="M31.0 51.5 H877.0" stroke="#f0faff" stroke-opacity="0.155" stroke-width="1"/>
<path d="M31.0 75.5 H877.0" stroke="#f0faff" stroke-opacity="0.155" stroke-width="1"/>
<path d="M31.0 100.5 H877.0" stroke="#f0faff" stroke-opacity="0.155" stroke-width="1"/>
<path d="M31.0 124.5 H877.0" stroke="#f0faff" stroke-opacity="0.155" stroke-width="1"/>
<path d="M31.0 149.5 H877.0" stroke="#f0faff" stroke-opacity="0.155" stroke-width="1"/>
<path d="M31.0 173.5 H877.0" stroke="#f0faff" stroke-opacity="0.155" stroke-width="1"/>
<path d="M109.5 51.0 V198.0" stroke="#f0faff" stroke-opacity="0.155" stroke-width="1"/>
<path d="M191.5 51.0 V198.0" stroke="#f0faff" stroke-opacity="0.155" stroke-width="1"/>
<path d="M273.5 51.0 V198.0" stroke="#f0faff" stroke-opacity="0.155" stroke-width="1"/>
<path d="M355.5 51.0 V198.0" stroke="#f0faff" stroke-opacity="0.155" stroke-width="1"/>
<path d="M437.5 51.0 V198.0" stroke="#f0faff" stroke-opacity="0.155" stroke-width="1"/>
<path d="M519.5 51.0 V198.0" stroke="#f0faff" stroke-opacity="0.155" stroke-width="1"/>
<path d="M601.5 51.0 V198.0" stroke="#f0faff" stroke-opacity="0.155" stroke-width="1"/>
<path d="M683.5 51.0 V198.0" stroke="#f0faff" stroke-opacity="0.155" stroke-width="1"/>
<path d="M765.5 51.0 V198.0" stroke="#f0faff" stroke-opacity="0.155" stroke-width="1"/>
<path d="M847.5 51.0 V198.0" stroke="#f0faff" stroke-opacity="0.155" stroke-width="1"/>
<polygon points="31.0,178.8 208.0,178.8 210.5,144.5 230.0,144.5 232.0,134.7 290.6,134.7 292.6,139.6 563.0,139.6 565.2,85.7 645.8,85.7 648.0,90.6 650.2,90.6 654.0,66.1 735.0,66.1 737.0,71.0 877.0,71.0 877.0,198.5 31.0,198.5" fill="#ad8a35" fill-opacity="0.97"/>
<path d="M31.0 75.5 H877.0" stroke="#ffffff" stroke-opacity="0.08"/>
<path d="M31.0 100.5 H877.0" stroke="#ffffff" stroke-opacity="0.08"/>
<path d="M31.0 124.5 H877.0" stroke="#ffffff" stroke-opacity="0.08"/>
<path d="M31.0 149.5 H877.0" stroke="#ffffff" stroke-opacity="0.08"/>
<path d="M31.0 173.5 H877.0" stroke="#ffffff" stroke-opacity="0.08"/>
<path d="M109.5 51.0 V198.0" stroke="#ffffff" stroke-opacity="0.08"/>
<path d="M191.5 51.0 V198.0" stroke="#ffffff" stroke-opacity="0.08"/>
<path d="M273.5 51.0 V198.0" stroke="#ffffff" stroke-opacity="0.08"/>
<path d="M355.5 51.0 V198.0" stroke="#ffffff" stroke-opacity="0.08"/>
<path d="M437.5 51.0 V198.0" stroke="#ffffff" stroke-opacity="0.08"/>
<path d="M519.5 51.0 V198.0" stroke="#ffffff" stroke-opacity="0.08"/>
<path d="M601.5 51.0 V198.0" stroke="#ffffff" stroke-opacity="0.08"/>
<path d="M683.5 51.0 V198.0" stroke="#ffffff" stroke-opacity="0.08"/>
<path d="M765.5 51.0 V198.0" stroke="#ffffff" stroke-opacity="0.08"/>
<path d="M847.5 51.0 V198.0" stroke="#ffffff" stroke-opacity="0.08"/>
<polyline points="31.0,178.8 208.0,178.8 210.5,144.5 230.0,144.5 232.0,134.7 290.6,134.7 292.6,139.6 563.0,139.6 565.2,85.7 645.8,85.7 648.0,90.6 650.2,90.6 654.0,66.1 735.0,66.1 737.0,71.0 877.0,71.0" stroke="#f0bd3e" stroke-width="2" stroke-linejoin="round"/>
<path d="M31 198.3 H877" stroke="#caa83f" stroke-width="1.6"/>
<path d="M31 199 H877" stroke="#7EB26D" stroke-width="0.8"/>
</svg>
</section>
<section class="panel" style="left:16px;top:371px">
<span class="t " style="left:9.30px;top:44.00px;font-size:12px;line-height:12px;letter-spacing:0.555px;color:#ccccdc;">0.00400</span>
<span class="t " style="left:9.30px;top:80.00px;font-size:12px;line-height:12px;letter-spacing:0.555px;color:#ccccdc;">0.00300</span>
<span class="t " style="left:9.30px;top:117.00px;font-size:12px;line-height:12px;letter-spacing:0.555px;color:#ccccdc;">0.00200</span>
<span class="t " style="left:10.80px;top:154.00px;font-size:12px;line-height:12px;letter-spacing:0.305px;color:#ccccdc;">0.00100</span>
<span class="t " style="left:49.33px;top:191.00px;font-size:12px;line-height:12px;letter-spacing:0.450px;color:#ccccdc;">0</span>
<span class="t " style="left:121.90px;top:206.00px;font-size:12px;line-height:12px;letter-spacing:0.443px;color:#ccccdc;">22:30</span>
<span class="t " style="left:200.90px;top:206.00px;font-size:12px;line-height:12px;letter-spacing:0.443px;color:#ccccdc;">23:00</span>
<span class="t " style="left:279.90px;top:206.00px;font-size:12px;line-height:12px;letter-spacing:0.443px;color:#ccccdc;">23:30</span>
<span class="t " style="left:358.90px;top:206.00px;font-size:12px;line-height:12px;letter-spacing:0.443px;color:#ccccdc;">00:00</span>
<span class="t " style="left:437.90px;top:206.00px;font-size:12px;line-height:12px;letter-spacing:0.443px;color:#ccccdc;">00:30</span>
<span class="t " style="left:516.90px;top:206.00px;font-size:12px;line-height:12px;letter-spacing:0.443px;color:#ccccdc;">01:00</span>
<span class="t " style="left:594.90px;top:206.00px;font-size:12px;line-height:12px;letter-spacing:0.443px;color:#ccccdc;">01:30</span>
<span class="t " style="left:673.90px;top:206.00px;font-size:12px;line-height:12px;letter-spacing:0.443px;color:#ccccdc;">02:00</span>
<span class="t " style="left:752.90px;top:206.00px;font-size:12px;line-height:12px;letter-spacing:0.443px;color:#ccccdc;">02:30</span>
<span class="t " style="left:831.90px;top:206.00px;font-size:12px;line-height:12px;letter-spacing:0.443px;color:#ccccdc;">03:00</span>
<i class="lg" style="left:18.0px;top:237px;background:#7EB26D"></i>
<span class="t " style="left:46.00px;top:231.00px;font-size:12px;line-height:12px;letter-spacing:0.315px;color:#ccccdc;">expired, redis_expo:9121</span>
<i class="lg" style="left:203.8px;top:237px;background:#EAB839"></i>
<span class="t " style="left:232.20px;top:231.00px;font-size:12px;line-height:12px;letter-spacing:0.360px;color:#ccccdc;">evicted, redis_expo:9121</span>
<h2>
<span class="t m" style="left:8.40px;top:9.00px;font-size:14px;line-height:14px;letter-spacing:0.606px;color:#d2d2e2;">Expired/Evicted Keys</span>
</h2>
<svg viewBox="0 0 904 258" fill="none">
<path d="M63.0 51.5 H877.0" stroke="#f0faff" stroke-opacity="0.155" stroke-width="1"/>
<path d="M63.0 87.5 H877.0" stroke="#f0faff" stroke-opacity="0.155" stroke-width="1"/>
<path d="M63.0 124.5 H877.0" stroke="#f0faff" stroke-opacity="0.155" stroke-width="1"/>
<path d="M63.0 161.5 H877.0" stroke="#f0faff" stroke-opacity="0.155" stroke-width="1"/>
<path d="M138.5 51.0 V198.0" stroke="#f0faff" stroke-opacity="0.155" stroke-width="1"/>
<path d="M217.5 51.0 V198.0" stroke="#f0faff" stroke-opacity="0.155" stroke-width="1"/>
<path d="M296.5 51.0 V198.0" stroke="#f0faff" stroke-opacity="0.155" stroke-width="1"/>
<path d="M375.5 51.0 V198.0" stroke="#f0faff" stroke-opacity="0.155" stroke-width="1"/>
<path d="M454.5 51.0 V198.0" stroke="#f0faff" stroke-opacity="0.155" stroke-width="1"/>
<path d="M533.5 51.0 V198.0" stroke="#f0faff" stroke-opacity="0.155" stroke-width="1"/>
<path d="M611.5 51.0 V198.0" stroke="#f0faff" stroke-opacity="0.155" stroke-width="1"/>
<path d="M690.5 51.0 V198.0" stroke="#f0faff" stroke-opacity="0.155" stroke-width="1"/>
<path d="M769.5 51.0 V198.0" stroke="#f0faff" stroke-opacity="0.155" stroke-width="1"/>
<path d="M848.5 51.0 V198.0" stroke="#f0faff" stroke-opacity="0.155" stroke-width="1"/>
<polygon points="311.9,198.0 313.5,75.0 314.4,70.2 315.6,70.4 319.4,75.2 321.6,70.2 324.2,75.2 326.6,70.0 327.0,78.0 328.6,198.0" fill="#7EB26D" fill-opacity="0.12"/>
<polyline points="311.9,198.0 313.5,75.0 314.4,70.2 315.6,70.4 319.4,75.2 321.6,70.2 324.2,75.2 326.6,70.0 327.0,78.0 328.6,198.0" stroke="#7dbb6c" stroke-width="1.8" stroke-linejoin="round"/>
<polygon points="653.6,198.0 655.9,68.9 666.7,68.9 669.0,198.0" fill="#7EB26D" fill-opacity="0.12"/>
<polyline points="653.6,198.0 655.9,68.9 666.7,68.9 669.0,198.0" stroke="#7dbb6c" stroke-width="1.8" stroke-linejoin="round"/>
<polygon points="739.4,198.0 741.4,68.9 752.5,68.9 754.5,198.0" fill="#7EB26D" fill-opacity="0.12"/>
<polyline points="739.4,198.0 741.4,68.9 752.5,68.9 754.5,198.0" stroke="#7dbb6c" stroke-width="1.8" stroke-linejoin="round"/>
<path d="M63.0 198.2 H877" stroke="#EAB839" stroke-width="2"/>
</svg>
</section>
<section class="panel" style="left:928px;top:371px">
<span class="t " style="left:9.53px;top:44.00px;font-size:12px;line-height:12px;letter-spacing:0.450px;color:#ccccdc;">6</span>
<span class="t " style="left:9.53px;top:68.00px;font-size:12px;line-height:12px;letter-spacing:0.450px;color:#ccccdc;">5</span>
<span class="t " style="left:9.53px;top:93.00px;font-size:12px;line-height:12px;letter-spacing:0.450px;color:#ccccdc;">4</span>
<span class="t " style="left:9.53px;top:117.00px;font-size:12px;line-height:12px;letter-spacing:0.450px;color:#ccccdc;">3</span>
<span class="t " style="left:9.53px;top:142.00px;font-size:12px;line-height:12px;letter-spacing:0.450px;color:#ccccdc;">2</span>
<span class="t " style="left:9.53px;top:166.00px;font-size:12px;line-height:12px;letter-spacing:0.450px;color:#ccccdc;">1</span>
<span class="t " style="left:9.53px;top:191.00px;font-size:12px;line-height:12px;letter-spacing:0.450px;color:#ccccdc;">0</span>
<span class="t " style="left:89.90px;top:206.00px;font-size:12px;line-height:12px;letter-spacing:0.443px;color:#ccccdc;">22:30</span>
<span class="t " style="left:171.90px;top:206.00px;font-size:12px;line-height:12px;letter-spacing:0.443px;color:#ccccdc;">23:00</span>
<span class="t " style="left:253.90px;top:206.00px;font-size:12px;line-height:12px;letter-spacing:0.443px;color:#ccccdc;">23:30</span>
<span class="t " style="left:336.90px;top:206.00px;font-size:12px;line-height:12px;letter-spacing:0.443px;color:#ccccdc;">00:00</span>
<span class="t " style="left:418.90px;top:206.00px;font-size:12px;line-height:12px;letter-spacing:0.443px;color:#ccccdc;">00:30</span>
<span class="t " style="left:500.90px;top:206.00px;font-size:12px;line-height:12px;letter-spacing:0.443px;color:#ccccdc;">01:00</span>
<span class="t " style="left:583.90px;top:206.00px;font-size:12px;line-height:12px;letter-spacing:0.443px;color:#ccccdc;">01:30</span>
<span class="t " style="left:665.90px;top:206.00px;font-size:12px;line-height:12px;letter-spacing:0.443px;color:#ccccdc;">02:00</span>
<span class="t " style="left:747.90px;top:206.00px;font-size:12px;line-height:12px;letter-spacing:0.443px;color:#ccccdc;">02:30</span>
<span class="t " style="left:830.90px;top:206.00px;font-size:12px;line-height:12px;letter-spacing:0.443px;color:#ccccdc;">03:00</span>
<i class="lg" style="left:18.0px;top:237px;background:#7EB26D"></i>
<span class="t " style="left:46.00px;top:231.00px;font-size:12px;line-height:12px;letter-spacing:0.741px;color:#ccccdc;">connected</span>
<i class="lg" style="left:123.0px;top:237px;background:#EAB839"></i>
<span class="t " style="left:151.60px;top:231.00px;font-size:12px;line-height:12px;letter-spacing:0.674px;color:#ccccdc;">blocked</span>
<h2>
<span class="t m" style="left:8.40px;top:9.00px;font-size:14px;line-height:14px;letter-spacing:0.734px;color:#d2d2e2;">Connected/Blocked Clients</span>
</h2>
<svg viewBox="0 0 904 258" fill="none">
<path d="M27.0 51.5 H877.0" stroke="#f0faff" stroke-opacity="0.155" stroke-width="1"/>
<path d="M27.0 75.5 H877.0" stroke="#f0faff" stroke-opacity="0.155" stroke-width="1"/>
<path d="M27.0 100.5 H877.0" stroke="#f0faff" stroke-opacity="0.155" stroke-width="1"/>
<path d="M27.0 124.5 H877.0" stroke="#f0faff" stroke-opacity="0.155" stroke-width="1"/>
<path d="M27.0 149.5 H877.0" stroke="#f0faff" stroke-opacity="0.155" stroke-width="1"/>
<path d="M27.0 173.5 H877.0" stroke="#f0faff" stroke-opacity="0.155" stroke-width="1"/>
<path d="M106.5 51.0 V198.0" stroke="#f0faff" stroke-opacity="0.155" stroke-width="1"/>
<path d="M188.5 51.0 V198.0" stroke="#f0faff" stroke-opacity="0.155" stroke-width="1"/>
<path d="M270.5 51.0 V198.0" stroke="#f0faff" stroke-opacity="0.155" stroke-width="1"/>
<path d="M353.5 51.0 V198.0" stroke="#f0faff" stroke-opacity="0.155" stroke-width="1"/>
<path d="M435.5 51.0 V198.0" stroke="#f0faff" stroke-opacity="0.155" stroke-width="1"/>
<path d="M517.5 51.0 V198.0" stroke="#f0faff" stroke-opacity="0.155" stroke-width="1"/>
<path d="M600.5 51.0 V198.0" stroke="#f0faff" stroke-opacity="0.155" stroke-width="1"/>
<path d="M682.5 51.0 V198.0" stroke="#f0faff" stroke-opacity="0.155" stroke-width="1"/>
<path d="M764.5 51.0 V198.0" stroke="#f0faff" stroke-opacity="0.155" stroke-width="1"/>
<path d="M847.5 51.0 V198.0" stroke="#f0faff" stroke-opacity="0.155" stroke-width="1"/>
<polygon points="27.0,173.5 563.6,173.5 565.4,100.0 632.2,100.0 633.6,75.5 730.6,75.5 732.3,100.0 799.4,100.0 800.8,124.5 818.7,124.5 819.8,173.5 877.0,173.5 877.0,198.0 27.0,198.0" fill="#7EB26D" fill-opacity="0.10"/>
<polyline points="27.0,173.5 563.6,173.5 565.4,100.0 632.2,100.0 633.6,75.5 730.6,75.5 732.3,100.0 799.4,100.0 800.8,124.5 818.7,124.5 819.8,173.5 877.0,173.5" stroke="#6fa362" stroke-width="1.1" stroke-linejoin="round"/>
<path d="M27.0 198.3 H877" stroke="#c49a35" stroke-width="1.2"/>
</svg>
</section>
<section class="panel" style="left:16px;top:637px">
<span class="t " style="left:25.30px;top:44.00px;font-size:12px;line-height:12px;letter-spacing:0.132px;color:#ccccdc;">2 ms</span>
<span class="t " style="left:8.90px;top:75.00px;font-size:12px;line-height:12px;letter-spacing:0.020px;color:#ccccdc;">1.50 ms</span>
<span class="t " style="left:25.90px;top:107.00px;font-size:12px;line-height:12px;letter-spacing:-0.068px;color:#ccccdc;">1 ms</span>
<span class="t " style="left:13.20px;top:138.00px;font-size:12px;line-height:12px;letter-spacing:0.446px;color:#ccccdc;">500 µs</span>
<span class="t " style="left:35.10px;top:170.00px;font-size:12px;line-height:12px;letter-spacing:0.297px;color:#ccccdc;">0 s</span>
<span class="t " style="left:117.90px;top:185.00px;font-size:12px;line-height:12px;letter-spacing:0.443px;color:#ccccdc;">22:30</span>
<span class="t " style="left:196.90px;top:185.00px;font-size:12px;line-height:12px;letter-spacing:0.443px;color:#ccccdc;">23:00</span>
<span class="t " style="left:276.90px;top:185.00px;font-size:12px;line-height:12px;letter-spacing:0.443px;color:#ccccdc;">23:30</span>
<span class="t " style="left:355.90px;top:185.00px;font-size:12px;line-height:12px;letter-spacing:0.443px;color:#ccccdc;">00:00</span>
<span class="t " style="left:434.90px;top:185.00px;font-size:12px;line-height:12px;letter-spacing:0.443px;color:#ccccdc;">00:30</span>
<span class="t " style="left:514.90px;top:185.00px;font-size:12px;line-height:12px;letter-spacing:0.443px;color:#ccccdc;">01:00</span>
<span class="t " style="left:593.90px;top:185.00px;font-size:12px;line-height:12px;letter-spacing:0.443px;color:#ccccdc;">01:30</span>
<span class="t " style="left:672.90px;top:185.00px;font-size:12px;line-height:12px;letter-spacing:0.443px;color:#ccccdc;">02:00</span>
<span class="t " style="left:751.90px;top:185.00px;font-size:12px;line-height:12px;letter-spacing:0.443px;color:#ccccdc;">02:30</span>
<span class="t " style="left:831.90px;top:185.00px;font-size:12px;line-height:12px;letter-spacing:0.443px;color:#ccccdc;">03:00</span>
<i class="lg" style="left:18.0px;top:216px;background:#7EB26D"></i>
<span class="t " style="left:46.20px;top:210.00px;font-size:12px;line-height:12px;letter-spacing:0.596px;color:#ccccdc;">client|setname</span>
<i class="lg" style="left:146.9px;top:216px;background:#EAB839"></i>
<span class="t " style="left:175.60px;top:210.00px;font-size:12px;line-height:12px;letter-spacing:0.754px;color:#ccccdc;">config|get</span>
<i class="lg" style="left:251.2px;top:216px;background:#6ED0E0"></i>
<span class="t " style="left:278.70px;top:210.00px;font-size:12px;line-height:12px;letter-spacing:0.643px;color:#ccccdc;">dbsize</span>
<i class="lg" style="left:333.0px;top:216px;background:#EF843C"></i>
<span class="t " style="left:360.80px;top:210.00px;font-size:12px;line-height:12px;letter-spacing:0.753px;color:#ccccdc;">decr</span>
<i class="lg" style="left:402.8px;top:216px;background:#E24D42"></i>
<span class="t " style="left:430.90px;top:210.00px;font-size:12px;line-height:12px;letter-spacing:1.010px;color:#ccccdc;">get</span>
<i class="lg" style="left:466.0px;top:216px;background:#1F78C1"></i>
<span class="t " style="left:494.10px;top:210.00px;font-size:12px;line-height:12px;letter-spacing:0.551px;color:#ccccdc;">info</span>
<i class="lg" style="left:532.3px;top:216px;background:#BA43A9"></i>
<span class="t " style="left:559.60px;top:210.00px;font-size:12px;line-height:12px;letter-spacing:0.630px;color:#ccccdc;">latency|histogram</span>
<i class="lg" style="left:680.2px;top:216px;background:#705DA0"></i>
<span class="t " style="left:707.70px;top:210.00px;font-size:12px;line-height:12px;letter-spacing:0.660px;color:#ccccdc;">latency|latest</span>
<i class="lg" style="left:18.0px;top:237px;background:#508642"></i>
<span class="t " style="left:46.20px;top:231.00px;font-size:12px;line-height:12px;letter-spacing:0.578px;color:#ccccdc;">memory|usage</span>
<i class="lg" style="left:148.1px;top:237px;background:#CCA300"></i>
<span class="t " style="left:176.20px;top:231.00px;font-size:12px;line-height:12px;letter-spacing:0.606px;color:#ccccdc;">module|list</span>
<i class="lg" style="left:255.8px;top:237px;background:#447EBC"></i>
<span class="t " style="left:283.90px;top:231.00px;font-size:12px;line-height:12px;letter-spacing:0.351px;color:#ccccdc;">scan</span>
<i class="lg" style="left:326.7px;top:237px;background:#C15C17"></i>
<span class="t " style="left:355.40px;top:231.00px;font-size:12px;line-height:12px;letter-spacing:0.551px;color:#ccccdc;">select</span>
<i class="lg" style="left:405.9px;top:237px;background:#890F02"></i>
<span class="t " style="left:433.80px;top:231.00px;font-size:12px;line-height:12px;letter-spacing:0.897px;color:#ccccdc;">set</span>
<i class="lg" style="left:468.3px;top:237px;background:#0A437C"></i>
<span class="t " style="left:496.40px;top:231.00px;font-size:12px;line-height:12px;letter-spacing:0.648px;color:#ccccdc;">slowlog|get</span>
<i class="lg" style="left:579.4px;top:237px;background:#6D1F62"></i>
<span class="t " style="left:607.20px;top:231.00px;font-size:12px;line-height:12px;letter-spacing:0.575px;color:#ccccdc;">slowlog|len</span>
<i class="lg" style="left:687.9px;top:237px;background:#584477"></i>
<span class="t " style="left:716.60px;top:231.00px;font-size:12px;line-height:12px;letter-spacing:0.572px;color:#ccccdc;">strlen</span>
<i class="lg" style="left:765.1px;top:237px;background:#B7DBAB"></i>
<span class="t " style="left:793.30px;top:231.00px;font-size:12px;line-height:12px;letter-spacing:1.333px;color:#ccccdc;">ttl</span>
<i class="lg" style="left:821.1px;top:237px;background:#F4D598"></i>
<span class="t " style="left:849.50px;top:231.00px;font-size:12px;line-height:12px;letter-spacing:0.773px;color:#ccccdc;">type</span>
<h2>
<span class="t m" style="left:8.40px;top:9.00px;font-size:14px;line-height:14px;letter-spacing:0.615px;color:#d2d2e2;">Average Time Spent by Command / sec</span>
</h2>
<svg viewBox="0 0 904 258" fill="none">
<path d="M58.0 51.5 H877.0" stroke="#f0faff" stroke-opacity="0.155" stroke-width="1"/>
<path d="M58.0 82.5 H877.0" stroke="#f0faff" stroke-opacity="0.155" stroke-width="1"/>
<path d="M58.0 114.5 H877.0" stroke="#f0faff" stroke-opacity="0.155" stroke-width="1"/>
<path d="M58.0 145.5 H877.0" stroke="#f0faff" stroke-opacity="0.155" stroke-width="1"/>
<path d="M134.5 51.0 V177.0" stroke="#f0faff" stroke-opacity="0.155" stroke-width="1"/>
<path d="M213.5 51.0 V177.0" stroke="#f0faff" stroke-opacity="0.155" stroke-width="1"/>
<path d="M293.5 51.0 V177.0" stroke="#f0faff" stroke-opacity="0.155" stroke-width="1"/>
<path d="M372.5 51.0 V177.0" stroke="#f0faff" stroke-opacity="0.155" stroke-width="1"/>
<path d="M451.5 51.0 V177.0" stroke="#f0faff" stroke-opacity="0.155" stroke-width="1"/>
<path d="M531.5 51.0 V177.0" stroke="#f0faff" stroke-opacity="0.155" stroke-width="1"/>
<path d="M610.5 51.0 V177.0" stroke="#f0faff" stroke-opacity="0.155" stroke-width="1"/>
<path d="M689.5 51.0 V177.0" stroke="#f0faff" stroke-opacity="0.155" stroke-width="1"/>
<path d="M768.5 51.0 V177.0" stroke="#f0faff" stroke-opacity="0.155" stroke-width="1"/>
<path d="M848.5 51.0 V177.0" stroke="#f0faff" stroke-opacity="0.155" stroke-width="1"/>
<polygon points="58.0,133.6 60.5,132.8 63.0,134.7 65.5,133.2 68.0,132.5 70.4,131.2 72.9,134.3 75.4,134.2 77.9,132.8 80.4,132.3 82.9,133.1 85.4,133.9 87.9,132.1 90.4,132.0 92.9,132.0 95.3,132.6 97.8,133.1 100.3,132.4 102.8,133.4 105.3,134.2 107.8,134.4 110.3,134.5 112.8,141.2 115.3,161.4 117.7,158.2 120.2,146.1 122.7,143.5 125.2,132.2 127.7,134.0 130.2,131.4 132.7,133.8 135.2,133.8 137.7,131.2 140.1,137.9 142.6,131.7 145.1,137.7 147.6,132.5 150.1,114.0 152.6,155.3 155.1,140.1 157.6,132.1 160.1,131.7 162.6,131.2 165.0,142.8 167.5,132.4 170.0,139.2 172.5,133.2 175.0,131.3 177.5,111.6 180.0,114.0 182.5,149.9 185.0,132.4 187.4,144.1 189.9,146.0 192.4,140.8 194.9,161.8 197.4,132.1 199.9,161.6 202.4,161.3 204.9,163.2 207.4,162.3 209.9,142.4 212.3,161.7 214.8,160.0 217.3,142.4 219.8,142.4 222.3,132.5 224.8,162.5 227.3,164.3 229.8,158.5 232.3,107.7 234.7,147.6 237.2,158.4 239.7,133.4 242.2,150.2 244.7,132.7 247.2,115.3 249.7,132.5 252.2,132.6 254.7,133.6 257.1,132.2 259.6,133.6 262.1,149.0 264.6,149.4 267.1,132.4 269.6,133.3 272.1,132.9 274.6,132.1 277.1,133.4 279.6,133.6 282.0,132.9 284.5,133.2 287.0,132.5 289.5,133.3 292.0,132.9 294.5,132.1 297.0,132.4 299.5,133.2 302.0,133.1 304.4,132.1 306.9,133.7 309.4,132.9 311.9,132.7 314.4,132.2 316.9,145.6 319.4,150.2 321.9,133.8 324.4,151.1 326.9,132.7 329.3,132.9 331.8,150.4 334.3,155.2 336.8,132.0 339.3,132.9 341.8,133.4 344.3,132.5 346.8,133.1 349.3,133.6 351.7,133.8 354.2,133.8 356.7,158.3 359.2,132.5 361.7,154.2 364.2,133.5 366.7,133.2 369.2,152.7 371.7,153.7 374.1,132.2 376.6,133.5 379.1,133.1 381.6,147.7 384.1,132.0 386.6,132.1 389.1,133.4 391.6,133.5 394.1,152.7 396.6,132.0 399.0,132.5 401.5,132.2 404.0,156.1 406.5,132.3 409.0,155.8 411.5,132.2 414.0,133.6 416.5,133.8 419.0,133.1 421.4,153.9 423.9,133.6 426.4,133.7 428.9,132.0 431.4,132.0 433.9,133.7 436.4,145.8 438.9,133.5 441.4,151.1 443.9,118.4 446.3,133.0 448.8,132.0 451.3,155.0 453.8,156.4 456.3,132.9 458.8,132.2 461.3,132.6 463.8,133.1 466.3,151.6 468.7,148.3 471.2,133.4 473.7,132.2 476.2,133.3 478.7,133.4 481.2,132.1 483.7,132.2 486.2,133.7 488.7,162.4 491.1,133.2 493.6,161.0 496.1,133.3 498.6,133.3 501.1,132.7 503.6,133.4 506.1,132.0 508.6,133.2 511.1,132.9 513.6,132.7 516.0,133.8 518.5,151.0 521.0,132.6 523.5,132.2 526.0,151.2 528.5,133.7 531.0,133.6 533.5,133.0 536.0,132.4 538.4,132.6 540.9,132.7 543.4,133.5 545.9,133.5 548.4,132.9 550.9,133.1 553.4,146.8 555.9,133.1 558.4,133.2 560.9,133.2 563.3,156.8 565.8,133.6 568.3,156.8 570.8,132.6 573.3,119.4 575.8,133.6 578.3,135.0 580.8,150.6 583.3,133.4 585.7,132.6 588.2,132.3 590.7,132.2 593.2,133.7 595.7,132.6 598.2,134.9 600.7,133.2 603.2,149.3 605.7,160.3 608.1,133.7 610.6,148.3 613.1,134.6 615.6,132.6 618.1,132.0 620.6,132.3 623.1,135.0 625.6,132.2 628.1,133.0 630.6,132.7 633.0,160.4 635.5,133.9 638.0,142.6 640.5,132.5 643.0,132.4 645.5,134.3 648.0,132.0 650.5,132.9 653.0,133.2 655.4,164.1 657.9,134.7 660.4,133.1 662.9,119.3 665.4,163.1 667.9,132.0 670.4,132.0 672.9,132.2 675.4,151.0 677.9,148.2 680.3,135.1 682.8,151.3 685.3,134.1 687.8,133.4 690.3,160.1 692.8,135.0 695.3,132.4 697.8,132.5 700.3,132.0 702.7,150.4 705.2,132.7 707.7,118.6 710.2,116.2 712.7,161.5 715.2,133.1 717.7,153.1 720.2,134.2 722.7,133.7 725.1,133.2 727.6,132.9 730.1,133.8 732.6,133.9 735.1,161.2 737.6,134.5 740.1,133.4 742.6,132.1 745.1,132.1 747.6,142.8 750.0,133.8 752.5,134.0 755.0,145.8 757.5,132.0 760.0,146.2 762.5,134.6 765.0,133.3 767.5,132.5 770.0,134.4 772.4,158.0 774.9,158.1 777.4,134.7 779.9,134.4 782.4,133.3 784.9,134.3 787.4,157.3 789.9,148.6 792.4,116.0 794.9,133.1 797.3,133.9 799.8,116.0 802.3,146.9 804.8,134.2 807.3,133.7 809.8,146.6 812.3,133.8 814.8,133.7 817.3,133.4 819.7,119.0 822.2,134.0 824.7,154.8 827.2,134.3 829.7,143.7 832.2,136.1 834.7,144.1 837.2,158.2 839.7,133.7 842.1,135.7 844.6,137.0 847.1,149.5 849.6,155.6 852.1,154.2 854.6,150.9 857.1,136.8 859.6,150.8 862.1,137.1 864.6,137.9 867.0,133.3 869.5,134.2 872.0,148.5 874.5,135.1 877.0,143.3 877.0,177.0 58.0,177.0" fill="#EAB839" fill-opacity="0.22"/>
<polyline points="58.0,133.6 60.5,132.8 63.0,134.7 65.5,133.2 68.0,132.5 70.4,131.2 72.9,134.3 75.4,134.2 77.9,132.8 80.4,132.3 82.9,133.1 85.4,133.9 87.9,132.1 90.4,132.0 92.9,132.0 95.3,132.6 97.8,133.1 100.3,132.4 102.8,133.4 105.3,134.2 107.8,134.4 110.3,134.5 112.8,141.2 115.3,161.4 117.7,158.2 120.2,146.1 122.7,143.5 125.2,132.2 127.7,134.0 130.2,131.4 132.7,133.8 135.2,133.8 137.7,131.2 140.1,137.9 142.6,131.7 145.1,137.7 147.6,132.5 150.1,114.0 152.6,155.3 155.1,140.1 157.6,132.1 160.1,131.7 162.6,131.2 165.0,142.8 167.5,132.4 170.0,139.2 172.5,133.2 175.0,131.3 177.5,111.6 180.0,114.0 182.5,149.9 185.0,132.4 187.4,144.1 189.9,146.0 192.4,140.8 194.9,161.8 197.4,132.1 199.9,161.6 202.4,161.3 204.9,163.2 207.4,162.3 209.9,142.4 212.3,161.7 214.8,160.0 217.3,142.4 219.8,142.4 222.3,132.5 224.8,162.5 227.3,164.3 229.8,158.5 232.3,107.7 234.7,147.6 237.2,158.4 239.7,133.4 242.2,150.2 244.7,132.7 247.2,115.3 249.7,132.5 252.2,132.6 254.7,133.6 257.1,132.2 259.6,133.6 262.1,149.0 264.6,149.4 267.1,132.4 269.6,133.3 272.1,132.9 274.6,132.1 277.1,133.4 279.6,133.6 282.0,132.9 284.5,133.2 287.0,132.5 289.5,133.3 292.0,132.9 294.5,132.1 297.0,132.4 299.5,133.2 302.0,133.1 304.4,132.1 306.9,133.7 309.4,132.9 311.9,132.7 314.4,132.2 316.9,145.6 319.4,150.2 321.9,133.8 324.4,151.1 326.9,132.7 329.3,132.9 331.8,150.4 334.3,155.2 336.8,132.0 339.3,132.9 341.8,133.4 344.3,132.5 346.8,133.1 349.3,133.6 351.7,133.8 354.2,133.8 356.7,158.3 359.2,132.5 361.7,154.2 364.2,133.5 366.7,133.2 369.2,152.7 371.7,153.7 374.1,132.2 376.6,133.5 379.1,133.1 381.6,147.7 384.1,132.0 386.6,132.1 389.1,133.4 391.6,133.5 394.1,152.7 396.6,132.0 399.0,132.5 401.5,132.2 404.0,156.1 406.5,132.3 409.0,155.8 411.5,132.2 414.0,133.6 416.5,133.8 419.0,133.1 421.4,153.9 423.9,133.6 426.4,133.7 428.9,132.0 431.4,132.0 433.9,133.7 436.4,145.8 438.9,133.5 441.4,151.1 443.9,118.4 446.3,133.0 448.8,132.0 451.3,155.0 453.8,156.4 456.3,132.9 458.8,132.2 461.3,132.6 463.8,133.1 466.3,151.6 468.7,148.3 471.2,133.4 473.7,132.2 476.2,133.3 478.7,133.4 481.2,132.1 483.7,132.2 486.2,133.7 488.7,162.4 491.1,133.2 493.6,161.0 496.1,133.3 498.6,133.3 501.1,132.7 503.6,133.4 506.1,132.0 508.6,133.2 511.1,132.9 513.6,132.7 516.0,133.8 518.5,151.0 521.0,132.6 523.5,132.2 526.0,151.2 528.5,133.7 531.0,133.6 533.5,133.0 536.0,132.4 538.4,132.6 540.9,132.7 543.4,133.5 545.9,133.5 548.4,132.9 550.9,133.1 553.4,146.8 555.9,133.1 558.4,133.2 560.9,133.2 563.3,156.8 565.8,133.6 568.3,156.8 570.8,132.6 573.3,119.4 575.8,133.6 578.3,135.0 580.8,150.6 583.3,133.4 585.7,132.6 588.2,132.3 590.7,132.2 593.2,133.7 595.7,132.6 598.2,134.9 600.7,133.2 603.2,149.3 605.7,160.3 608.1,133.7 610.6,148.3 613.1,134.6 615.6,132.6 618.1,132.0 620.6,132.3 623.1,135.0 625.6,132.2 628.1,133.0 630.6,132.7 633.0,160.4 635.5,133.9 638.0,142.6 640.5,132.5 643.0,132.4 645.5,134.3 648.0,132.0 650.5,132.9 653.0,133.2 655.4,164.1 657.9,134.7 660.4,133.1 662.9,119.3 665.4,163.1 667.9,132.0 670.4,132.0 672.9,132.2 675.4,151.0 677.9,148.2 680.3,135.1 682.8,151.3 685.3,134.1 687.8,133.4 690.3,160.1 692.8,135.0 695.3,132.4 697.8,132.5 700.3,132.0 702.7,150.4 705.2,132.7 707.7,118.6 710.2,116.2 712.7,161.5 715.2,133.1 717.7,153.1 720.2,134.2 722.7,133.7 725.1,133.2 727.6,132.9 730.1,133.8 732.6,133.9 735.1,161.2 737.6,134.5 740.1,133.4 742.6,132.1 745.1,132.1 747.6,142.8 750.0,133.8 752.5,134.0 755.0,145.8 757.5,132.0 760.0,146.2 762.5,134.6 765.0,133.3 767.5,132.5 770.0,134.4 772.4,158.0 774.9,158.1 777.4,134.7 779.9,134.4 782.4,133.3 784.9,134.3 787.4,157.3 789.9,148.6 792.4,116.0 794.9,133.1 797.3,133.9 799.8,116.0 802.3,146.9 804.8,134.2 807.3,133.7 809.8,146.6 812.3,133.8 814.8,133.7 817.3,133.4 819.7,119.0 822.2,134.0 824.7,154.8 827.2,134.3 829.7,143.7 832.2,136.1 834.7,144.1 837.2,158.2 839.7,133.7 842.1,135.7 844.6,137.0 847.1,149.5 849.6,155.6 852.1,154.2 854.6,150.9 857.1,136.8 859.6,150.8 862.1,137.1 864.6,137.9 867.0,133.3 869.5,134.2 872.0,148.5 874.5,135.1 877.0,143.3" stroke="#EAB839" stroke-width="1.25" stroke-linejoin="round"/>
<polygon points="58.0,138.8 60.5,138.3 63.0,138.1 65.5,137.1 68.0,136.8 70.4,139.1 72.9,138.9 75.4,137.7 77.9,139.0 80.4,138.1 82.9,138.4 85.4,137.8 87.9,139.6 90.4,148.9 92.9,141.6 95.3,149.5 97.8,137.5 100.3,136.7 102.8,137.5 105.3,138.9 107.8,138.6 110.3,138.1 112.8,137.1 115.3,138.0 117.7,137.1 120.2,152.0 122.7,147.4 125.2,138.9 127.7,138.4 130.2,163.8 132.7,142.5 135.2,137.9 137.7,163.9 140.1,150.0 142.6,147.9 145.1,147.2 147.6,139.1 150.1,156.3 152.6,138.1 155.1,155.5 157.6,147.8 160.1,135.2 162.6,163.3 165.0,135.0 167.5,139.1 170.0,134.8 172.5,124.1 175.0,136.9 177.5,154.1 180.0,135.2 182.5,136.6 185.0,137.8 187.4,156.4 189.9,154.1 192.4,161.0 194.9,137.0 197.4,144.9 199.9,143.2 202.4,162.1 204.9,162.7 207.4,163.7 209.9,165.0 212.3,162.2 214.8,166.0 217.3,162.2 219.8,164.6 222.3,138.6 224.8,160.2 227.3,125.6 229.8,126.5 232.3,142.8 234.7,127.7 237.2,125.2 239.7,127.4 242.2,126.9 244.7,126.3 247.2,129.1 249.7,127.5 252.2,129.0 254.7,128.1 257.1,127.8 259.6,127.5 262.1,128.2 264.6,128.7 267.1,128.0 269.6,105.8 272.1,128.2 274.6,129.1 277.1,127.3 279.6,127.6 282.0,129.1 284.5,127.5 287.0,127.4 289.5,129.0 292.0,128.8 294.5,127.3 297.0,127.9 299.5,128.6 302.0,128.8 304.4,127.2 306.9,128.7 309.4,128.4 311.9,127.5 314.4,127.5 316.9,127.6 319.4,127.3 321.9,127.6 324.4,127.8 326.9,129.1 329.3,128.7 331.8,128.3 334.3,127.8 336.8,128.5 339.3,128.8 341.8,127.3 344.3,127.2 346.8,128.4 349.3,127.3 351.7,128.2 354.2,128.3 356.7,127.7 359.2,128.5 361.7,127.3 364.2,127.6 366.7,127.6 369.2,128.5 371.7,127.8 374.1,127.9 376.6,128.7 379.1,127.2 381.6,127.5 384.1,128.0 386.6,128.9 389.1,128.0 391.6,128.5 394.1,127.9 396.6,128.5 399.0,128.7 401.5,128.2 404.0,128.2 406.5,127.3 409.0,127.4 411.5,127.6 414.0,128.7 416.5,127.5 419.0,128.0 421.4,128.7 423.9,128.9 426.4,127.7 428.9,128.9 431.4,128.2 433.9,128.5 436.4,128.7 438.9,127.4 441.4,128.4 443.9,128.4 446.3,128.8 448.8,128.0 451.3,128.2 453.8,128.9 456.3,128.9 458.8,127.6 461.3,128.3 463.8,128.7 466.3,128.2 468.7,127.8 471.2,128.9 473.7,127.8 476.2,127.9 478.7,127.7 481.2,127.9 483.7,105.8 486.2,163.7 488.7,127.8 491.1,127.6 493.6,129.1 496.1,145.3 498.6,127.8 501.1,129.1 503.6,143.7 506.1,129.1 508.6,127.5 511.1,128.9 513.6,128.4 516.0,120.3 518.5,127.7 521.0,153.3 523.5,156.8 526.0,128.8 528.5,128.4 531.0,128.7 533.5,128.9 536.0,128.3 538.4,127.9 540.9,128.6 543.4,127.9 545.9,127.6 548.4,127.9 550.9,139.6 553.4,128.5 555.9,144.8 558.4,127.9 560.9,127.5 563.3,128.2 565.8,127.5 568.3,145.4 570.8,145.6 573.3,147.0 575.8,145.3 578.3,145.0 580.8,146.5 583.3,145.3 585.7,146.4 588.2,157.5 590.7,144.9 593.2,159.0 595.7,145.2 598.2,159.8 600.7,143.3 603.2,147.4 605.7,147.8 608.1,143.3 610.6,147.2 613.1,144.0 615.6,145.2 618.1,143.8 620.6,144.0 623.1,143.8 625.6,154.3 628.1,145.7 630.6,146.8 633.0,144.5 635.5,147.5 638.0,143.7 640.5,143.2 643.0,145.7 645.5,145.2 648.0,158.0 650.5,144.8 653.0,157.2 655.4,144.4 657.9,149.5 660.4,147.3 662.9,146.7 665.4,143.5 667.9,143.0 670.4,147.9 672.9,146.9 675.4,145.5 677.9,146.0 680.3,143.4 682.8,148.0 685.3,144.4 687.8,149.1 690.3,147.9 692.8,147.4 695.3,147.3 697.8,145.4 700.3,144.0 702.7,146.2 705.2,143.3 707.7,145.3 710.2,147.4 712.7,146.5 715.2,147.0 717.7,146.1 720.2,143.0 722.7,158.4 725.1,143.7 727.6,150.3 730.1,144.1 732.6,145.2 735.1,145.1 737.6,145.9 740.1,143.0 742.6,144.6 745.1,145.6 747.6,143.9 750.0,147.2 752.5,143.0 755.0,145.1 757.5,145.1 760.0,144.9 762.5,149.9 765.0,143.2 767.5,146.5 770.0,146.5 772.4,154.5 774.9,152.9 777.4,145.8 779.9,143.2 782.4,146.2 784.9,144.1 787.4,154.2 789.9,146.6 792.4,144.7 794.9,149.8 797.3,147.8 799.8,150.7 802.3,147.0 804.8,147.6 807.3,147.7 809.8,146.7 812.3,147.0 814.8,143.3 817.3,152.9 819.7,147.7 822.2,161.1 824.7,147.1 827.2,160.9 829.7,119.0 832.2,118.3 834.7,117.6 837.2,118.5 839.7,117.7 842.1,118.1 844.6,119.2 847.1,132.7 849.6,118.7 852.1,118.3 854.6,119.1 857.1,135.8 859.6,118.0 862.1,117.5 864.6,139.8 867.0,131.4 869.5,110.9 872.0,137.1 874.5,118.8 877.0,119.3 877.0,177.0 58.0,177.0" fill="#2581cc" fill-opacity="0.18"/>
<polyline points="58.0,138.8 60.5,138.3 63.0,138.1 65.5,137.1 68.0,136.8 70.4,139.1 72.9,138.9 75.4,137.7 77.9,139.0 80.4,138.1 82.9,138.4 85.4,137.8 87.9,139.6 90.4,148.9 92.9,141.6 95.3,149.5 97.8,137.5 100.3,136.7 102.8,137.5 105.3,138.9 107.8,138.6 110.3,138.1 112.8,137.1 115.3,138.0 117.7,137.1 120.2,152.0 122.7,147.4 125.2,138.9 127.7,138.4 130.2,163.8 132.7,142.5 135.2,137.9 137.7,163.9 140.1,150.0 142.6,147.9 145.1,147.2 147.6,139.1 150.1,156.3 152.6,138.1 155.1,155.5 157.6,147.8 160.1,135.2 162.6,163.3 165.0,135.0 167.5,139.1 170.0,134.8 172.5,124.1 175.0,136.9 177.5,154.1 180.0,135.2 182.5,136.6 185.0,137.8 187.4,156.4 189.9,154.1 192.4,161.0 194.9,137.0 197.4,144.9 199.9,143.2 202.4,162.1 204.9,162.7 207.4,163.7 209.9,165.0 212.3,162.2 214.8,166.0 217.3,162.2 219.8,164.6 222.3,138.6 224.8,160.2 227.3,125.6 229.8,126.5 232.3,142.8 234.7,127.7 237.2,125.2 239.7,127.4 242.2,126.9 244.7,126.3 247.2,129.1 249.7,127.5 252.2,129.0 254.7,128.1 257.1,127.8 259.6,127.5 262.1,128.2 264.6,128.7 267.1,128.0 269.6,105.8 272.1,128.2 274.6,129.1 277.1,127.3 279.6,127.6 282.0,129.1 284.5,127.5 287.0,127.4 289.5,129.0 292.0,128.8 294.5,127.3 297.0,127.9 299.5,128.6 302.0,128.8 304.4,127.2 306.9,128.7 309.4,128.4 311.9,127.5 314.4,127.5 316.9,127.6 319.4,127.3 321.9,127.6 324.4,127.8 326.9,129.1 329.3,128.7 331.8,128.3 334.3,127.8 336.8,128.5 339.3,128.8 341.8,127.3 344.3,127.2 346.8,128.4 349.3,127.3 351.7,128.2 354.2,128.3 356.7,127.7 359.2,128.5 361.7,127.3 364.2,127.6 366.7,127.6 369.2,128.5 371.7,127.8 374.1,127.9 376.6,128.7 379.1,127.2 381.6,127.5 384.1,128.0 386.6,128.9 389.1,128.0 391.6,128.5 394.1,127.9 396.6,128.5 399.0,128.7 401.5,128.2 404.0,128.2 406.5,127.3 409.0,127.4 411.5,127.6 414.0,128.7 416.5,127.5 419.0,128.0 421.4,128.7 423.9,128.9 426.4,127.7 428.9,128.9 431.4,128.2 433.9,128.5 436.4,128.7 438.9,127.4 441.4,128.4 443.9,128.4 446.3,128.8 448.8,128.0 451.3,128.2 453.8,128.9 456.3,128.9 458.8,127.6 461.3,128.3 463.8,128.7 466.3,128.2 468.7,127.8 471.2,128.9 473.7,127.8 476.2,127.9 478.7,127.7 481.2,127.9 483.7,105.8 486.2,163.7 488.7,127.8 491.1,127.6 493.6,129.1 496.1,145.3 498.6,127.8 501.1,129.1 503.6,143.7 506.1,129.1 508.6,127.5 511.1,128.9 513.6,128.4 516.0,120.3 518.5,127.7 521.0,153.3 523.5,156.8 526.0,128.8 528.5,128.4 531.0,128.7 533.5,128.9 536.0,128.3 538.4,127.9 540.9,128.6 543.4,127.9 545.9,127.6 548.4,127.9 550.9,139.6 553.4,128.5 555.9,144.8 558.4,127.9 560.9,127.5 563.3,128.2 565.8,127.5 568.3,145.4 570.8,145.6 573.3,147.0 575.8,145.3 578.3,145.0 580.8,146.5 583.3,145.3 585.7,146.4 588.2,157.5 590.7,144.9 593.2,159.0 595.7,145.2 598.2,159.8 600.7,143.3 603.2,147.4 605.7,147.8 608.1,143.3 610.6,147.2 613.1,144.0 615.6,145.2 618.1,143.8 620.6,144.0 623.1,143.8 625.6,154.3 628.1,145.7 630.6,146.8 633.0,144.5 635.5,147.5 638.0,143.7 640.5,143.2 643.0,145.7 645.5,145.2 648.0,158.0 650.5,144.8 653.0,157.2 655.4,144.4 657.9,149.5 660.4,147.3 662.9,146.7 665.4,143.5 667.9,143.0 670.4,147.9 672.9,146.9 675.4,145.5 677.9,146.0 680.3,143.4 682.8,148.0 685.3,144.4 687.8,149.1 690.3,147.9 692.8,147.4 695.3,147.3 697.8,145.4 700.3,144.0 702.7,146.2 705.2,143.3 707.7,145.3 710.2,147.4 712.7,146.5 715.2,147.0 717.7,146.1 720.2,143.0 722.7,158.4 725.1,143.7 727.6,150.3 730.1,144.1 732.6,145.2 735.1,145.1 737.6,145.9 740.1,143.0 742.6,144.6 745.1,145.6 747.6,143.9 750.0,147.2 752.5,143.0 755.0,145.1 757.5,145.1 760.0,144.9 762.5,149.9 765.0,143.2 767.5,146.5 770.0,146.5 772.4,154.5 774.9,152.9 777.4,145.8 779.9,143.2 782.4,146.2 784.9,144.1 787.4,154.2 789.9,146.6 792.4,144.7 794.9,149.8 797.3,147.8 799.8,150.7 802.3,147.0 804.8,147.6 807.3,147.7 809.8,146.7 812.3,147.0 814.8,143.3 817.3,152.9 819.7,147.7 822.2,161.1 824.7,147.1 827.2,160.9 829.7,119.0 832.2,118.3 834.7,117.6 837.2,118.5 839.7,117.7 842.1,118.1 844.6,119.2 847.1,132.7 849.6,118.7 852.1,118.3 854.6,119.1 857.1,135.8 859.6,118.0 862.1,117.5 864.6,139.8 867.0,131.4 869.5,110.9 872.0,137.1 874.5,118.8 877.0,119.3" stroke="#2581cc" stroke-width="1.25" stroke-linejoin="round"/>
<polygon points="560.9,151.6 563.3,147.6 565.8,135.0 568.3,133.3 570.8,133.7 573.3,135.4 575.8,153.5 578.3,132.6 580.8,158.0 583.3,146.1 585.7,166.7 588.2,153.0 590.7,162.9 593.2,159.4 595.7,133.4 598.2,167.2 600.7,134.9 603.2,151.7 605.7,133.4 608.1,132.8 610.6,134.0 613.1,150.2 615.6,160.2 618.1,133.3 620.6,132.8 623.1,132.9 625.6,134.7 628.1,165.6 630.6,133.6 633.0,166.6 635.5,133.8 638.0,146.7 640.5,135.3 643.0,164.9 645.5,134.9 648.0,135.3 650.5,133.3 653.0,162.3 655.4,148.4 657.9,132.8 660.4,148.4 662.9,132.6 665.4,163.1 667.9,133.1 670.4,134.8 672.9,134.8 675.4,133.6 677.9,132.7 680.3,134.3 682.8,132.8 685.3,133.9 687.8,135.3 690.3,148.4 692.8,135.0 695.3,134.2 697.8,160.2 700.3,146.9 702.7,135.0 705.2,153.4 707.7,132.4 710.2,155.8 712.7,154.1 715.2,134.4 717.7,155.3 720.2,135.2 722.7,159.8 725.1,157.1 727.6,132.4 730.1,151.6 732.6,134.0 735.1,132.8 737.6,147.3 740.1,133.5 742.6,133.6 745.1,132.8 747.6,132.3 750.0,153.7 752.5,133.2 755.0,153.3 757.5,135.1 760.0,151.8 762.5,135.2 765.0,134.4 767.5,159.0 770.0,134.3 772.4,134.3 774.9,161.6 777.4,159.2 779.9,161.8 782.4,133.8 784.9,165.7 787.4,134.4 789.9,135.0 792.4,148.9 794.9,134.8 797.3,133.2 799.8,135.3 802.3,151.1 804.8,149.2 807.3,133.0 809.8,166.2 812.3,134.7 814.8,134.4 817.3,135.1 819.7,160.4 822.2,155.1 824.7,146.9 827.2,133.4 829.7,149.4 832.2,149.5 834.7,165.8 837.2,133.1 839.7,134.1 842.1,155.1 844.6,146.1 847.1,156.9 849.6,135.2 852.1,163.6 854.6,133.9 857.1,157.9 859.6,132.8 862.1,162.3 864.6,148.3 867.0,164.8 869.5,165.1 872.0,132.9 874.5,133.2 877.0,135.3 877.0,177.0 560.9,177.0" fill="#e6b87a" fill-opacity="0.02"/>
<polyline points="560.9,151.6 563.3,147.6 565.8,135.0 568.3,133.3 570.8,133.7 573.3,135.4 575.8,153.5 578.3,132.6 580.8,158.0 583.3,146.1 585.7,166.7 588.2,153.0 590.7,162.9 593.2,159.4 595.7,133.4 598.2,167.2 600.7,134.9 603.2,151.7 605.7,133.4 608.1,132.8 610.6,134.0 613.1,150.2 615.6,160.2 618.1,133.3 620.6,132.8 623.1,132.9 625.6,134.7 628.1,165.6 630.6,133.6 633.0,166.6 635.5,133.8 638.0,146.7 640.5,135.3 643.0,164.9 645.5,134.9 648.0,135.3 650.5,133.3 653.0,162.3 655.4,148.4 657.9,132.8 660.4,148.4 662.9,132.6 665.4,163.1 667.9,133.1 670.4,134.8 672.9,134.8 675.4,133.6 677.9,132.7 680.3,134.3 682.8,132.8 685.3,133.9 687.8,135.3 690.3,148.4 692.8,135.0 695.3,134.2 697.8,160.2 700.3,146.9 702.7,135.0 705.2,153.4 707.7,132.4 710.2,155.8 712.7,154.1 715.2,134.4 717.7,155.3 720.2,135.2 722.7,159.8 725.1,157.1 727.6,132.4 730.1,151.6 732.6,134.0 735.1,132.8 737.6,147.3 740.1,133.5 742.6,133.6 745.1,132.8 747.6,132.3 750.0,153.7 752.5,133.2 755.0,153.3 757.5,135.1 760.0,151.8 762.5,135.2 765.0,134.4 767.5,159.0 770.0,134.3 772.4,134.3 774.9,161.6 777.4,159.2 779.9,161.8 782.4,133.8 784.9,165.7 787.4,134.4 789.9,135.0 792.4,148.9 794.9,134.8 797.3,133.2 799.8,135.3 802.3,151.1 804.8,149.2 807.3,133.0 809.8,166.2 812.3,134.7 814.8,134.4 817.3,135.1 819.7,160.4 822.2,155.1 824.7,146.9 827.2,133.4 829.7,149.4 832.2,149.5 834.7,165.8 837.2,133.1 839.7,134.1 842.1,155.1 844.6,146.1 847.1,156.9 849.6,135.2 852.1,163.6 854.6,133.9 857.1,157.9 859.6,132.8 862.1,162.3 864.6,148.3 867.0,164.8 869.5,165.1 872.0,132.9 874.5,133.2 877.0,135.3" stroke="#e6b87a" stroke-width="0.9" stroke-linejoin="round"/>
<polygon points="58.0,149.7 60.5,165.0 63.0,149.6 65.5,167.5 68.0,165.9 70.4,166.9 72.9,147.3 75.4,148.7 77.9,167.6 80.4,148.1 82.9,147.7 85.4,161.7 87.9,148.6 90.4,163.5 92.9,147.7 95.3,146.9 97.8,163.3 100.3,166.9 102.8,148.5 105.3,162.7 107.8,147.2 110.3,161.6 112.8,147.1 115.3,165.2 117.7,148.1 120.2,149.7 122.7,165.9 125.2,149.4 127.7,166.2 130.2,148.8 132.7,165.2 135.2,168.0 137.7,149.8 140.1,166.2 142.6,149.2 145.1,147.6 147.6,167.0 150.1,160.7 152.6,149.3 155.1,147.4 157.6,148.4 160.1,148.7 162.6,168.1 165.0,163.6 167.5,163.7 170.0,167.6 172.5,148.6 175.0,147.1 177.5,169.3 180.0,148.4 182.5,147.4 185.0,148.3 187.4,148.3 189.9,161.1 192.4,161.1 194.9,149.2 197.4,163.1 199.9,146.9 202.4,168.1 204.9,168.4 207.4,167.1 209.9,169.0 212.3,166.6 214.8,169.8 217.3,169.8 219.8,169.1 222.3,169.3 224.8,149.3 227.3,149.3 229.8,162.1 232.3,147.3 234.7,164.4 237.2,164.4 239.7,129.9 242.2,164.4 244.7,132.6 247.2,148.6 249.7,130.4 252.2,131.8 254.7,131.1 257.1,134.0 259.6,155.2 262.1,161.2 264.6,155.5 267.1,133.6 269.6,117.1 272.1,130.8 274.6,130.5 277.1,133.6 279.6,131.5 282.0,164.0 284.5,131.0 287.0,158.5 289.5,133.1 292.0,130.8 294.5,134.0 297.0,130.7 299.5,160.0 302.0,130.7 304.4,133.4 306.9,157.1 309.4,133.1 311.9,156.3 314.4,152.8 316.9,133.2 319.4,131.3 321.9,119.0 324.4,157.8 326.9,130.5 329.3,131.5 331.8,130.7 334.3,131.4 336.8,160.1 339.3,131.6 341.8,144.9 344.3,166.7 346.8,158.7 349.3,131.1 351.7,133.4 354.2,134.0 356.7,152.0 359.2,143.8 361.7,155.1 364.2,159.3 366.7,131.3 369.2,130.4 371.7,150.6 374.1,158.2 376.6,130.8 379.1,142.6 381.6,133.0 384.1,161.0 386.6,164.0 389.1,134.1 391.6,132.1 394.1,160.4 396.6,158.4 399.0,132.6 401.5,144.6 404.0,132.2 406.5,155.4 409.0,162.0 411.5,132.6 414.0,134.0 416.5,132.1 419.0,132.5 421.4,132.4 423.9,110.9 426.4,134.0 428.9,131.4 431.4,133.5 433.9,147.0 436.4,133.0 438.9,133.5 441.4,132.0 443.9,158.5 446.3,131.1 448.8,134.2 451.3,133.3 453.8,162.4 456.3,133.6 458.8,153.4 461.3,166.4 463.8,143.8 466.3,160.0 468.7,148.9 471.2,132.9 473.7,132.5 476.2,130.8 478.7,159.3 481.2,146.4 483.7,133.0 486.2,130.6 488.7,131.4 491.1,143.8 493.6,131.8 496.1,167.0 498.6,130.5 501.1,149.8 503.6,134.2 506.1,131.1 508.6,133.1 511.1,131.2 513.6,130.8 516.0,145.3 518.5,163.6 521.0,132.0 523.5,131.0 526.0,116.7 528.5,117.7 531.0,154.9 533.5,116.2 536.0,116.6 538.4,147.8 540.9,117.8 543.4,116.0 545.9,117.2 548.4,116.1 550.9,118.2 553.4,93.8 555.9,161.9 558.4,164.4 560.9,117.7 563.3,166.1 565.8,161.2 568.3,115.8 570.8,153.5 573.3,117.8 575.8,159.6 578.3,115.4 580.8,157.6 583.3,117.8 585.7,156.5 588.2,119.3 590.7,116.8 593.2,152.9 595.7,118.2 598.2,117.4 600.7,133.3 603.2,115.9 605.7,116.0 608.1,145.2 610.6,166.4 613.1,155.6 615.6,115.4 618.1,159.5 620.6,119.0 623.1,117.4 625.6,119.3 628.1,153.4 630.6,150.8 633.0,159.9 635.5,164.6 638.0,162.6 640.5,119.3 643.0,120.0 645.5,116.9 648.0,150.5 650.5,119.6 653.0,165.2 655.4,115.6 657.9,117.1 660.4,154.1 662.9,119.5 665.4,158.5 667.9,118.8 670.4,129.8 672.9,119.4 675.4,156.0 677.9,116.2 680.3,119.0 682.8,157.8 685.3,166.4 687.8,140.8 690.3,117.7 692.8,162.3 695.3,164.4 697.8,152.9 700.3,135.7 702.7,118.1 705.2,115.8 707.7,119.0 710.2,117.7 712.7,135.2 715.2,117.5 717.7,160.9 720.2,129.0 722.7,153.6 725.1,116.6 727.6,112.7 730.1,160.4 732.6,116.3 735.1,150.2 737.6,120.1 740.1,154.6 742.6,118.4 745.1,115.3 747.6,150.6 750.0,117.8 752.5,159.8 755.0,117.8 757.5,164.6 760.0,120.2 762.5,118.5 765.0,127.9 767.5,117.8 770.0,152.6 772.4,143.2 774.9,164.6 777.4,164.5 779.9,118.0 782.4,119.2 784.9,117.4 787.4,158.1 789.9,78.1 792.4,117.0 794.9,100.1 797.3,119.4 799.8,129.4 802.3,119.9 804.8,150.0 807.3,117.7 809.8,117.1 812.3,154.2 814.8,98.9 817.3,118.0 819.7,154.3 822.2,131.9 824.7,115.7 827.2,116.1 829.7,78.1 832.2,134.8 834.7,164.6 837.2,120.1 839.7,162.2 842.1,164.4 844.6,115.4 847.1,118.8 849.6,164.0 852.1,117.5 854.6,165.8 857.1,166.0 859.6,115.3 862.1,119.6 864.6,118.2 867.0,153.1 869.5,135.1 872.0,145.1 874.5,164.8 877.0,117.8 877.0,177.0 58.0,177.0" fill="#c649b6" fill-opacity="0.21"/>
<polyline points="58.0,149.7 60.5,165.0 63.0,149.6 65.5,167.5 68.0,165.9 70.4,166.9 72.9,147.3 75.4,148.7 77.9,167.6 80.4,148.1 82.9,147.7 85.4,161.7 87.9,148.6 90.4,163.5 92.9,147.7 95.3,146.9 97.8,163.3 100.3,166.9 102.8,148.5 105.3,162.7 107.8,147.2 110.3,161.6 112.8,147.1 115.3,165.2 117.7,148.1 120.2,149.7 122.7,165.9 125.2,149.4 127.7,166.2 130.2,148.8 132.7,165.2 135.2,168.0 137.7,149.8 140.1,166.2 142.6,149.2 145.1,147.6 147.6,167.0 150.1,160.7 152.6,149.3 155.1,147.4 157.6,148.4 160.1,148.7 162.6,168.1 165.0,163.6 167.5,163.7 170.0,167.6 172.5,148.6 175.0,147.1 177.5,169.3 180.0,148.4 182.5,147.4 185.0,148.3 187.4,148.3 189.9,161.1 192.4,161.1 194.9,149.2 197.4,163.1 199.9,146.9 202.4,168.1 204.9,168.4 207.4,167.1 209.9,169.0 212.3,166.6 214.8,169.8 217.3,169.8 219.8,169.1 222.3,169.3 224.8,149.3 227.3,149.3 229.8,162.1 232.3,147.3 234.7,164.4 237.2,164.4 239.7,129.9 242.2,164.4 244.7,132.6 247.2,148.6 249.7,130.4 252.2,131.8 254.7,131.1 257.1,134.0 259.6,155.2 262.1,161.2 264.6,155.5 267.1,133.6 269.6,117.1 272.1,130.8 274.6,130.5 277.1,133.6 279.6,131.5 282.0,164.0 284.5,131.0 287.0,158.5 289.5,133.1 292.0,130.8 294.5,134.0 297.0,130.7 299.5,160.0 302.0,130.7 304.4,133.4 306.9,157.1 309.4,133.1 311.9,156.3 314.4,152.8 316.9,133.2 319.4,131.3 321.9,119.0 324.4,157.8 326.9,130.5 329.3,131.5 331.8,130.7 334.3,131.4 336.8,160.1 339.3,131.6 341.8,144.9 344.3,166.7 346.8,158.7 349.3,131.1 351.7,133.4 354.2,134.0 356.7,152.0 359.2,143.8 361.7,155.1 364.2,159.3 366.7,131.3 369.2,130.4 371.7,150.6 374.1,158.2 376.6,130.8 379.1,142.6 381.6,133.0 384.1,161.0 386.6,164.0 389.1,134.1 391.6,132.1 394.1,160.4 396.6,158.4 399.0,132.6 401.5,144.6 404.0,132.2 406.5,155.4 409.0,162.0 411.5,132.6 414.0,134.0 416.5,132.1 419.0,132.5 421.4,132.4 423.9,110.9 426.4,134.0 428.9,131.4 431.4,133.5 433.9,147.0 436.4,133.0 438.9,133.5 441.4,132.0 443.9,158.5 446.3,131.1 448.8,134.2 451.3,133.3 453.8,162.4 456.3,133.6 458.8,153.4 461.3,166.4 463.8,143.8 466.3,160.0 468.7,148.9 471.2,132.9 473.7,132.5 476.2,130.8 478.7,159.3 481.2,146.4 483.7,133.0 486.2,130.6 488.7,131.4 491.1,143.8 493.6,131.8 496.1,167.0 498.6,130.5 501.1,149.8 503.6,134.2 506.1,131.1 508.6,133.1 511.1,131.2 513.6,130.8 516.0,145.3 518.5,163.6 521.0,132.0 523.5,131.0 526.0,116.7 528.5,117.7 531.0,154.9 533.5,116.2 536.0,116.6 538.4,147.8 540.9,117.8 543.4,116.0 545.9,117.2 548.4,116.1 550.9,118.2 553.4,93.8 555.9,161.9 558.4,164.4 560.9,117.7 563.3,166.1 565.8,161.2 568.3,115.8 570.8,153.5 573.3,117.8 575.8,159.6 578.3,115.4 580.8,157.6 583.3,117.8 585.7,156.5 588.2,119.3 590.7,116.8 593.2,152.9 595.7,118.2 598.2,117.4 600.7,133.3 603.2,115.9 605.7,116.0 608.1,145.2 610.6,166.4 613.1,155.6 615.6,115.4 618.1,159.5 620.6,119.0 623.1,117.4 625.6,119.3 628.1,153.4 630.6,150.8 633.0,159.9 635.5,164.6 638.0,162.6 640.5,119.3 643.0,120.0 645.5,116.9 648.0,150.5 650.5,119.6 653.0,165.2 655.4,115.6 657.9,117.1 660.4,154.1 662.9,119.5 665.4,158.5 667.9,118.8 670.4,129.8 672.9,119.4 675.4,156.0 677.9,116.2 680.3,119.0 682.8,157.8 685.3,166.4 687.8,140.8 690.3,117.7 692.8,162.3 695.3,164.4 697.8,152.9 700.3,135.7 702.7,118.1 705.2,115.8 707.7,119.0 710.2,117.7 712.7,135.2 715.2,117.5 717.7,160.9 720.2,129.0 722.7,153.6 725.1,116.6 727.6,112.7 730.1,160.4 732.6,116.3 735.1,150.2 737.6,120.1 740.1,154.6 742.6,118.4 745.1,115.3 747.6,150.6 750.0,117.8 752.5,159.8 755.0,117.8 757.5,164.6 760.0,120.2 762.5,118.5 765.0,127.9 767.5,117.8 770.0,152.6 772.4,143.2 774.9,164.6 777.4,164.5 779.9,118.0 782.4,119.2 784.9,117.4 787.4,158.1 789.9,78.1 792.4,117.0 794.9,100.1 797.3,119.4 799.8,129.4 802.3,119.9 804.8,150.0 807.3,117.7 809.8,117.1 812.3,154.2 814.8,98.9 817.3,118.0 819.7,154.3 822.2,131.9 824.7,115.7 827.2,116.1 829.7,78.1 832.2,134.8 834.7,164.6 837.2,120.1 839.7,162.2 842.1,164.4 844.6,115.4 847.1,118.8 849.6,164.0 852.1,117.5 854.6,165.8 857.1,166.0 859.6,115.3 862.1,119.6 864.6,118.2 867.0,153.1 869.5,135.1 872.0,145.1 874.5,164.8 877.0,117.8" stroke="#c649b6" stroke-width="1.2" stroke-linejoin="round"/>
<path d="M58.0 177.4 H877" stroke="#733d90" stroke-width="1.6"/>
<circle cx="576.5" cy="177.2" r="1.5" fill="#e6d9a8"/>
<circle cx="583.8" cy="177.2" r="1.5" fill="#e6d9a8"/>
<circle cx="641.2" cy="177.2" r="1.5" fill="#e6d9a8"/>
<circle cx="659.6" cy="177.2" r="1.5" fill="#e6d9a8"/>
<circle cx="680.6" cy="177.2" r="1.5" fill="#e6d9a8"/>
</svg>
</section>
<section class="panel" style="left:928px;top:637px">
<span class="t " style="left:17.20px;top:44.00px;font-size:12px;line-height:12px;letter-spacing:0.506px;color:#ccccdc;">300 µs</span>
<span class="t " style="left:17.80px;top:86.00px;font-size:12px;line-height:12px;letter-spacing:0.386px;color:#ccccdc;">200 µs</span>
<span class="t " style="left:9.20px;top:128.00px;font-size:12px;line-height:12px;letter-spacing:0.075px;color:#ccccdc;">100.0 µs</span>
<span class="t " style="left:39.90px;top:170.00px;font-size:12px;line-height:12px;letter-spacing:0.047px;color:#ccccdc;">0 s</span>
<span class="t " style="left:121.90px;top:185.00px;font-size:12px;line-height:12px;letter-spacing:0.443px;color:#ccccdc;">22:30</span>
<span class="t " style="left:200.90px;top:185.00px;font-size:12px;line-height:12px;letter-spacing:0.443px;color:#ccccdc;">23:00</span>
<span class="t " style="left:279.90px;top:185.00px;font-size:12px;line-height:12px;letter-spacing:0.443px;color:#ccccdc;">23:30</span>
<span class="t " style="left:358.90px;top:185.00px;font-size:12px;line-height:12px;letter-spacing:0.443px;color:#ccccdc;">00:00</span>
<span class="t " style="left:437.90px;top:185.00px;font-size:12px;line-height:12px;letter-spacing:0.443px;color:#ccccdc;">00:30</span>
<span class="t " style="left:516.90px;top:185.00px;font-size:12px;line-height:12px;letter-spacing:0.443px;color:#ccccdc;">01:00</span>
<span class="t " style="left:594.90px;top:185.00px;font-size:12px;line-height:12px;letter-spacing:0.443px;color:#ccccdc;">01:30</span>
<span class="t " style="left:673.90px;top:185.00px;font-size:12px;line-height:12px;letter-spacing:0.443px;color:#ccccdc;">02:00</span>
<span class="t " style="left:752.90px;top:185.00px;font-size:12px;line-height:12px;letter-spacing:0.443px;color:#ccccdc;">02:30</span>
<span class="t " style="left:831.90px;top:185.00px;font-size:12px;line-height:12px;letter-spacing:0.443px;color:#ccccdc;">03:00</span>
<i class="lg" style="left:18.0px;top:216px;background:#7EB26D"></i>
<span class="t " style="left:46.10px;top:210.00px;font-size:12px;line-height:12px;letter-spacing:0.604px;color:#ccccdc;">client|setname</span>
<i class="lg" style="left:147.2px;top:216px;background:#EAB839"></i>
<span class="t " style="left:175.60px;top:210.00px;font-size:12px;line-height:12px;letter-spacing:0.754px;color:#ccccdc;">config|get</span>
<i class="lg" style="left:251.1px;top:216px;background:#6ED0E0"></i>
<span class="t " style="left:278.70px;top:210.00px;font-size:12px;line-height:12px;letter-spacing:0.643px;color:#ccccdc;">dbsize</span>
<i class="lg" style="left:333.2px;top:216px;background:#EF843C"></i>
<span class="t " style="left:360.80px;top:210.00px;font-size:12px;line-height:12px;letter-spacing:0.719px;color:#ccccdc;">decr</span>
<i class="lg" style="left:403.0px;top:216px;background:#E24D42"></i>
<span class="t " style="left:430.80px;top:210.00px;font-size:12px;line-height:12px;letter-spacing:1.010px;color:#ccccdc;">get</span>
<i class="lg" style="left:465.9px;top:216px;background:#1F78C1"></i>
<span class="t " style="left:494.30px;top:210.00px;font-size:12px;line-height:12px;letter-spacing:0.551px;color:#ccccdc;">info</span>
<i class="lg" style="left:532.2px;top:216px;background:#BA43A9"></i>
<span class="t " style="left:559.80px;top:210.00px;font-size:12px;line-height:12px;letter-spacing:0.611px;color:#ccccdc;">latency|histogram</span>
<i class="lg" style="left:680.4px;top:216px;background:#705DA0"></i>
<span class="t " style="left:707.90px;top:210.00px;font-size:12px;line-height:12px;letter-spacing:0.637px;color:#ccccdc;">latency|latest</span>
<i class="lg" style="left:18.0px;top:237px;background:#508642"></i>
<span class="t " style="left:46.10px;top:231.00px;font-size:12px;line-height:12px;letter-spacing:0.587px;color:#ccccdc;">memory|usage</span>
<i class="lg" style="left:148.0px;top:237px;background:#CCA300"></i>
<span class="t " style="left:176.50px;top:231.00px;font-size:12px;line-height:12px;letter-spacing:0.451px;color:#ccccdc;">scan</span>
<i class="lg" style="left:218.9px;top:237px;background:#447EBC"></i>
<span class="t " style="left:247.70px;top:231.00px;font-size:12px;line-height:12px;letter-spacing:0.551px;color:#ccccdc;">select</span>
<i class="lg" style="left:298.2px;top:237px;background:#C15C17"></i>
<span class="t " style="left:326.60px;top:231.00px;font-size:12px;line-height:12px;letter-spacing:0.747px;color:#ccccdc;">set</span>
<i class="lg" style="left:359.9px;top:237px;background:#890F02"></i>
<span class="t " style="left:388.60px;top:231.00px;font-size:12px;line-height:12px;letter-spacing:0.658px;color:#ccccdc;">slowlog|get</span>
<i class="lg" style="left:472.2px;top:237px;background:#0A437C"></i>
<span class="t " style="left:499.80px;top:231.00px;font-size:12px;line-height:12px;letter-spacing:0.575px;color:#ccccdc;">slowlog|len</span>
<i class="lg" style="left:581.3px;top:237px;background:#6D1F62"></i>
<span class="t " style="left:609.20px;top:231.00px;font-size:12px;line-height:12px;letter-spacing:0.552px;color:#ccccdc;">strlen</span>
<i class="lg" style="left:658.0px;top:237px;background:#584477"></i>
<span class="t " style="left:685.80px;top:231.00px;font-size:12px;line-height:12px;letter-spacing:1.233px;color:#ccccdc;">ttl</span>
<i class="lg" style="left:714.0px;top:237px;background:#B7DBAB"></i>
<span class="t " style="left:742.10px;top:231.00px;font-size:12px;line-height:12px;letter-spacing:0.773px;color:#ccccdc;">type</span>
<h2>
<span class="t m" style="left:8.40px;top:9.00px;font-size:14px;line-height:14px;letter-spacing:0.651px;color:#d2d2e2;">Total Time Spent by Command / sec</span>
</h2>
<svg viewBox="0 0 904 258" fill="none">
<path d="M63.0 51.5 H877.0" stroke="#f0faff" stroke-opacity="0.155" stroke-width="1"/>
<path d="M63.0 93.5 H877.0" stroke="#f0faff" stroke-opacity="0.155" stroke-width="1"/>
<path d="M63.0 135.5 H877.0" stroke="#f0faff" stroke-opacity="0.155" stroke-width="1"/>
<path d="M138.5 51.0 V177.0" stroke="#f0faff" stroke-opacity="0.155" stroke-width="1"/>
<path d="M217.5 51.0 V177.0" stroke="#f0faff" stroke-opacity="0.155" stroke-width="1"/>
<path d="M296.5 51.0 V177.0" stroke="#f0faff" stroke-opacity="0.155" stroke-width="1"/>
<path d="M375.5 51.0 V177.0" stroke="#f0faff" stroke-opacity="0.155" stroke-width="1"/>
<path d="M454.5 51.0 V177.0" stroke="#f0faff" stroke-opacity="0.155" stroke-width="1"/>
<path d="M533.5 51.0 V177.0" stroke="#f0faff" stroke-opacity="0.155" stroke-width="1"/>
<path d="M611.5 51.0 V177.0" stroke="#f0faff" stroke-opacity="0.155" stroke-width="1"/>
<path d="M690.5 51.0 V177.0" stroke="#f0faff" stroke-opacity="0.155" stroke-width="1"/>
<path d="M769.5 51.0 V177.0" stroke="#f0faff" stroke-opacity="0.155" stroke-width="1"/>
<path d="M848.5 51.0 V177.0" stroke="#f0faff" stroke-opacity="0.155" stroke-width="1"/>
<polygon points="63.0,127.9 65.5,127.5 67.9,127.4 70.4,127.3 72.9,151.5 75.4,127.7 77.8,129.0 80.3,136.7 82.8,127.0 85.3,129.4 87.7,130.0 90.2,128.9 92.7,135.5 95.2,129.6 97.6,137.8 100.1,136.7 102.6,137.4 105.1,136.2 107.5,128.5 110.0,134.8 112.5,127.1 115.0,127.5 117.4,146.9 119.9,137.6 122.4,128.9 124.9,151.2 127.3,126.5 129.8,137.9 132.3,129.4 134.8,132.9 137.2,118.9 139.7,127.3 142.2,124.6 144.6,133.9 147.1,130.4 149.6,132.2 152.1,131.9 154.5,143.7 157.0,134.8 159.5,148.5 162.0,141.1 164.4,120.3 166.9,155.7 169.4,133.8 171.9,135.6 174.3,133.3 176.8,133.0 179.3,127.5 181.8,134.1 184.2,147.2 186.7,125.5 189.2,125.5 191.7,151.3 194.1,137.8 196.6,145.5 199.1,135.9 201.6,151.0 204.0,145.7 206.5,155.6 209.0,148.7 211.4,142.4 213.9,151.1 216.4,150.3 218.9,161.8 221.3,161.7 223.8,163.3 226.3,161.6 228.8,162.5 231.2,155.2 233.7,139.6 236.2,138.8 238.7,128.2 241.1,135.7 243.6,133.5 246.1,113.2 248.6,111.8 251.0,114.0 253.5,112.5 256.0,111.8 258.5,112.7 260.9,137.9 263.4,134.5 265.9,138.3 268.4,149.5 270.8,132.8 273.3,96.4 275.8,127.5 278.3,158.6 280.7,113.2 283.2,124.0 285.7,125.5 288.1,113.8 290.6,114.9 293.1,116.3 295.6,110.8 298.0,124.5 300.5,111.2 303.0,116.4 305.5,115.1 307.9,110.3 310.4,112.8 312.9,112.6 315.4,128.0 317.8,128.4 320.3,126.2 322.8,111.9 325.3,112.1 327.7,111.8 330.2,124.2 332.7,123.3 335.2,126.0 337.6,113.1 340.1,125.2 342.6,114.2 345.1,111.9 347.5,128.3 350.0,112.3 352.5,116.4 355.0,112.7 357.4,112.2 359.9,113.1 362.4,112.1 364.8,112.2 367.3,115.5 369.8,121.7 372.3,128.2 374.7,127.4 377.2,127.5 379.7,121.8 382.2,128.0 384.6,121.0 387.1,125.7 389.6,115.4 392.1,128.8 394.5,115.1 397.0,112.7 399.5,115.5 402.0,126.6 404.4,114.3 406.9,119.6 409.4,121.0 411.9,114.7 414.3,123.1 416.8,114.1 419.3,125.7 421.8,125.8 424.2,112.4 426.7,116.6 429.2,125.8 431.7,113.5 434.1,110.9 436.6,110.5 439.1,127.5 441.5,111.2 444.0,111.7 446.5,110.3 449.0,124.8 451.4,121.8 453.9,111.9 456.4,130.9 458.9,113.6 461.3,111.5 463.8,112.0 466.3,113.5 468.8,113.7 471.2,112.2 473.7,116.3 476.2,138.4 478.7,112.5 481.1,112.8 483.6,126.6 486.1,111.5 488.6,130.4 491.0,114.7 493.5,127.8 496.0,145.1 498.5,113.8 500.9,132.6 503.4,129.7 505.9,114.0 508.3,129.0 510.8,116.5 513.3,118.1 515.8,130.1 518.2,118.2 520.7,129.4 523.2,114.6 525.7,116.0 528.1,131.7 530.6,117.1 533.1,118.8 535.6,134.0 538.0,117.6 540.5,116.3 543.0,131.4 545.5,118.3 547.9,116.0 550.4,130.6 552.9,130.9 555.4,90.1 557.8,130.2 560.3,117.7 562.8,113.8 565.3,129.1 567.7,127.0 570.2,130.6 572.7,131.7 575.2,133.4 577.6,53.9 580.1,80.5 582.6,93.5 585.0,99.7 587.5,115.6 590.0,101.7 592.5,98.9 594.9,93.3 597.4,73.7 599.9,90.9 602.4,112.3 604.8,115.2 607.3,121.5 609.8,97.9 612.3,95.4 614.7,70.6 617.2,77.2 619.7,126.5 622.2,95.6 624.6,73.1 627.1,68.0 629.6,65.6 632.1,95.0 634.5,80.8 637.0,99.3 639.5,102.5 642.0,77.8 644.4,66.1 646.9,95.1 649.4,89.8 651.9,76.0 654.3,108.1 656.8,81.1 659.3,69.7 661.7,74.5 664.2,86.6 666.7,101.9 669.2,113.6 671.6,78.2 674.1,78.3 676.6,68.7 679.1,102.3 681.5,103.5 684.0,66.4 686.5,80.4 689.0,83.8 691.4,92.8 693.9,100.6 696.4,104.7 698.9,74.8 701.3,80.6 703.8,101.8 706.3,120.8 708.8,73.7 711.2,87.8 713.7,74.0 716.2,84.1 718.7,68.3 721.1,107.5 723.6,68.3 726.1,67.2 728.6,100.4 731.0,73.3 733.5,122.5 736.0,94.4 738.4,81.7 740.9,101.6 743.4,101.4 745.9,83.4 748.3,97.4 750.8,74.8 753.3,79.9 755.8,66.2 758.2,100.1 760.7,73.0 763.2,79.2 765.7,93.1 768.1,66.6 770.6,95.9 773.1,67.3 775.6,98.1 778.0,81.9 780.5,106.8 783.0,84.4 785.5,80.0 787.9,80.8 790.4,58.6 792.9,67.4 795.4,71.1 797.8,79.6 800.3,94.8 802.8,115.1 805.2,61.6 807.7,62.0 810.2,68.7 812.7,103.4 815.1,107.0 817.6,58.6 820.1,113.8 822.6,118.2 825.0,109.5 827.5,160.6 830.0,128.7 832.5,110.2 834.9,107.8 837.4,108.1 839.9,108.3 842.4,122.8 844.8,126.3 847.3,109.4 849.8,120.0 852.3,104.7 854.7,128.9 857.2,122.0 859.7,106.3 862.2,129.5 864.6,112.0 867.1,106.6 869.6,125.4 872.1,117.2 874.5,117.1 877.0,111.5 877.0,133.3 874.5,143.7 872.1,143.2 869.6,131.4 867.1,131.9 864.6,132.7 862.2,132.5 859.7,129.5 857.2,147.1 854.7,133.8 852.3,129.0 849.8,140.4 847.3,133.1 844.8,133.6 842.4,143.9 839.9,132.2 837.4,128.9 834.9,134.2 832.5,130.6 830.0,133.9 827.5,162.3 825.0,132.1 822.6,142.2 820.1,117.6 817.6,100.6 815.1,130.5 812.7,130.4 810.2,93.6 807.7,86.2 805.2,92.3 802.8,116.6 800.3,97.4 797.8,85.3 795.4,97.8 792.9,93.4 790.4,94.3 787.9,103.2 785.5,106.8 783.0,105.5 780.5,112.4 778.0,104.5 775.6,123.4 773.1,92.7 770.6,100.7 768.1,97.5 765.7,115.1 763.2,103.9 760.7,96.7 758.2,124.2 755.8,97.4 753.3,104.0 750.8,101.4 748.3,101.9 745.9,106.5 743.4,130.0 740.9,126.0 738.4,112.2 736.0,124.7 733.5,125.3 731.0,103.7 728.6,104.5 726.1,97.0 723.6,94.9 721.1,113.2 718.7,92.7 716.2,111.6 713.7,101.6 711.2,116.4 708.8,104.4 706.3,125.4 703.8,104.2 701.3,102.8 698.9,101.7 696.4,129.5 693.9,105.8 691.4,95.3 689.0,107.3 686.5,105.8 684.0,96.2 681.5,107.5 679.1,127.2 676.6,94.6 674.1,106.4 671.6,104.4 669.2,115.5 666.7,105.6 664.2,89.4 661.7,101.4 659.3,94.9 656.8,107.3 654.3,137.0 651.9,101.4 649.4,121.1 646.9,98.1 644.4,96.1 642.0,101.6 639.5,104.9 637.0,121.5 634.5,103.7 632.1,100.3 629.6,97.1 627.1,92.8 624.6,100.1 622.2,99.7 619.7,129.5 617.2,101.2 614.7,101.9 612.3,99.0 609.8,98.9 607.3,124.7 604.8,119.4 602.4,115.5 599.9,94.3 597.4,97.1 594.9,120.5 592.5,101.5 590.0,103.8 587.5,141.3 585.0,102.8 582.6,96.6 580.1,103.2 577.6,94.3 575.2,134.9 572.7,150.0 570.2,136.1 567.7,134.9 565.3,135.7 562.8,135.6 560.3,135.7 557.8,150.9 555.4,121.6 552.9,135.6 550.4,148.5 547.9,136.3 545.5,135.5 543.0,149.8 540.5,135.8 538.0,135.7 535.6,135.0 533.1,135.8 530.6,135.1 528.1,136.3 525.7,135.4 523.2,135.3 520.7,134.9 518.2,135.2 515.8,135.6 513.3,136.2 510.8,136.0 508.3,135.3 505.9,135.2 503.4,136.1 500.9,135.3 498.5,135.0 496.0,146.9 493.5,136.0 491.0,135.4 488.6,151.1 486.1,135.2 483.6,135.2 481.1,135.0 478.7,135.3 476.2,148.1 473.7,135.9 471.2,135.4 468.8,135.1 466.3,134.8 463.8,135.3 461.3,136.0 458.9,135.8 456.4,150.6 453.9,135.2 451.4,136.0 449.0,135.8 446.5,135.0 444.0,136.0 441.5,135.5 439.1,134.8 436.6,135.2 434.1,135.1 431.7,135.4 429.2,135.0 426.7,135.6 424.2,135.1 421.8,135.6 419.3,135.5 416.8,135.0 414.3,135.4 411.9,135.8 409.4,135.2 406.9,143.4 404.4,135.4 402.0,135.7 399.5,134.9 397.0,135.0 394.5,135.6 392.1,141.3 389.6,135.8 387.1,149.3 384.6,135.2 382.2,135.1 379.7,135.3 377.2,135.5 374.7,135.8 372.3,135.4 369.8,135.7 367.3,135.3 364.8,134.8 362.4,134.9 359.9,135.1 357.4,135.6 355.0,136.0 352.5,135.7 350.0,135.0 347.5,135.2 345.1,135.4 342.6,135.3 340.1,134.9 337.6,135.3 335.2,135.4 332.7,135.1 330.2,135.2 327.7,135.1 325.3,135.8 322.8,135.5 320.3,135.5 317.8,135.8 315.4,135.2 312.9,135.2 310.4,135.4 307.9,134.8 305.5,135.5 303.0,135.6 300.5,134.9 298.0,135.2 295.6,135.5 293.1,136.1 290.6,135.5 288.1,135.8 285.7,136.0 283.2,135.3 280.7,135.3 278.3,162.7 275.8,134.2 273.3,130.8 270.8,140.0 268.4,154.3 265.9,143.6 263.4,139.8 260.9,142.5 258.5,133.2 256.0,132.2 253.5,131.2 251.0,131.4 248.6,130.8 246.1,132.9 243.6,136.1 241.1,145.8 238.7,136.3 236.2,154.5 233.7,144.1 231.2,157.9 228.8,165.7 226.3,165.7 223.8,166.0 221.3,165.3 218.9,165.4 216.4,157.2 213.9,155.7 211.4,143.6 209.0,157.0 206.5,159.9 204.0,145.8 201.6,151.5 199.1,143.7 196.6,153.9 194.1,145.5 191.7,158.7 189.2,135.7 186.7,142.5 184.2,150.2 181.8,139.3 179.3,144.0 176.8,134.6 174.3,146.0 171.9,148.5 169.4,142.9 166.9,158.0 164.4,137.1 162.0,144.5 159.5,157.3 157.0,150.0 154.5,147.0 152.1,147.5 149.6,145.0 147.1,138.4 144.6,140.9 142.2,131.4 139.7,145.2 137.2,135.7 134.8,146.0 132.3,138.8 129.8,139.2 127.3,139.5 124.9,153.7 122.4,139.3 119.9,139.6 117.4,150.9 115.0,139.3 112.5,139.5 110.0,139.1 107.5,139.7 105.1,139.4 102.6,139.5 100.1,139.3 97.6,140.0 95.2,139.7 92.7,139.5 90.2,139.6 87.7,139.5 85.3,139.5 82.8,139.8 80.3,138.9 77.8,139.4 75.4,139.1 72.9,152.9 70.4,139.3 67.9,140.0 65.5,139.3 63.0,139.1" fill="#97398b"/>
<polygon points="63.0,139.1 65.5,139.3 67.9,140.0 70.4,139.3 72.9,152.9 75.4,139.1 77.8,139.4 80.3,138.9 82.8,139.8 85.3,139.5 87.7,139.5 90.2,139.6 92.7,139.5 95.2,139.7 97.6,140.0 100.1,139.3 102.6,139.5 105.1,139.4 107.5,139.7 110.0,139.1 112.5,139.5 115.0,139.3 117.4,150.9 119.9,139.6 122.4,139.3 124.9,153.7 127.3,139.5 129.8,139.2 132.3,138.8 134.8,146.0 137.2,135.7 139.7,145.2 142.2,131.4 144.6,140.9 147.1,138.4 149.6,145.0 152.1,147.5 154.5,147.0 157.0,150.0 159.5,157.3 162.0,144.5 164.4,137.1 166.9,158.0 169.4,142.9 171.9,148.5 174.3,146.0 176.8,134.6 179.3,144.0 181.8,139.3 184.2,150.2 186.7,142.5 189.2,135.7 191.7,158.7 194.1,145.5 196.6,153.9 199.1,143.7 201.6,151.5 204.0,145.8 206.5,159.9 209.0,157.0 211.4,143.6 213.9,155.7 216.4,157.2 218.9,165.4 221.3,165.3 223.8,166.0 226.3,165.7 228.8,165.7 231.2,157.9 233.7,144.1 236.2,154.5 238.7,136.3 241.1,145.8 243.6,136.1 246.1,132.9 248.6,130.8 251.0,131.4 253.5,131.2 256.0,132.2 258.5,133.2 260.9,142.5 263.4,139.8 265.9,143.6 268.4,154.3 270.8,140.0 273.3,130.8 275.8,134.2 278.3,162.7 280.7,135.3 283.2,135.3 285.7,136.0 288.1,135.8 290.6,135.5 293.1,136.1 295.6,135.5 298.0,135.2 300.5,134.9 303.0,135.6 305.5,135.5 307.9,134.8 310.4,135.4 312.9,135.2 315.4,135.2 317.8,135.8 320.3,135.5 322.8,135.5 325.3,135.8 327.7,135.1 330.2,135.2 332.7,135.1 335.2,135.4 337.6,135.3 340.1,134.9 342.6,135.3 345.1,135.4 347.5,135.2 350.0,135.0 352.5,135.7 355.0,136.0 357.4,135.6 359.9,135.1 362.4,134.9 364.8,134.8 367.3,135.3 369.8,135.7 372.3,135.4 374.7,135.8 377.2,135.5 379.7,135.3 382.2,135.1 384.6,135.2 387.1,149.3 389.6,135.8 392.1,141.3 394.5,135.6 397.0,135.0 399.5,134.9 402.0,135.7 404.4,135.4 406.9,143.4 409.4,135.2 411.9,135.8 414.3,135.4 416.8,135.0 419.3,135.5 421.8,135.6 424.2,135.1 426.7,135.6 429.2,135.0 431.7,135.4 434.1,135.1 436.6,135.2 439.1,134.8 441.5,135.5 444.0,136.0 446.5,135.0 449.0,135.8 451.4,136.0 453.9,135.2 456.4,150.6 458.9,135.8 461.3,136.0 463.8,135.3 466.3,134.8 468.8,135.1 471.2,135.4 473.7,135.9 476.2,148.1 478.7,135.3 481.1,135.0 483.6,135.2 486.1,135.2 488.6,151.1 491.0,135.4 493.5,136.0 496.0,146.9 498.5,135.0 500.9,135.3 503.4,136.1 505.9,135.2 508.3,135.3 510.8,136.0 513.3,136.2 515.8,135.6 518.2,135.2 520.7,134.9 523.2,135.3 525.7,135.4 528.1,136.3 530.6,135.1 533.1,135.8 535.6,135.0 538.0,135.7 540.5,135.8 543.0,149.8 545.5,135.5 547.9,136.3 550.4,148.5 552.9,135.6 555.4,121.6 557.8,150.9 560.3,135.7 562.8,135.6 565.3,135.7 567.7,134.9 570.2,136.1 572.7,150.0 575.2,134.9 577.6,94.3 580.1,103.2 582.6,96.6 585.0,102.8 587.5,141.3 590.0,103.8 592.5,101.5 594.9,120.5 597.4,97.1 599.9,94.3 602.4,115.5 604.8,119.4 607.3,124.7 609.8,98.9 612.3,99.0 614.7,101.9 617.2,101.2 619.7,129.5 622.2,99.7 624.6,100.1 627.1,92.8 629.6,97.1 632.1,100.3 634.5,103.7 637.0,121.5 639.5,104.9 642.0,101.6 644.4,96.1 646.9,98.1 649.4,121.1 651.9,101.4 654.3,137.0 656.8,107.3 659.3,94.9 661.7,101.4 664.2,89.4 666.7,105.6 669.2,115.5 671.6,104.4 674.1,106.4 676.6,94.6 679.1,127.2 681.5,107.5 684.0,96.2 686.5,105.8 689.0,107.3 691.4,95.3 693.9,105.8 696.4,129.5 698.9,101.7 701.3,102.8 703.8,104.2 706.3,125.4 708.8,104.4 711.2,116.4 713.7,101.6 716.2,111.6 718.7,92.7 721.1,113.2 723.6,94.9 726.1,97.0 728.6,104.5 731.0,103.7 733.5,125.3 736.0,124.7 738.4,112.2 740.9,126.0 743.4,130.0 745.9,106.5 748.3,101.9 750.8,101.4 753.3,104.0 755.8,97.4 758.2,124.2 760.7,96.7 763.2,103.9 765.7,115.1 768.1,97.5 770.6,100.7 773.1,92.7 775.6,123.4 778.0,104.5 780.5,112.4 783.0,105.5 785.5,106.8 787.9,103.2 790.4,94.3 792.9,93.4 795.4,97.8 797.8,85.3 800.3,97.4 802.8,116.6 805.2,92.3 807.7,86.2 810.2,93.6 812.7,130.4 815.1,130.5 817.6,100.6 820.1,117.6 822.6,142.2 825.0,132.1 827.5,162.3 830.0,133.9 832.5,130.6 834.9,134.2 837.4,128.9 839.9,132.2 842.4,143.9 844.8,133.6 847.3,133.1 849.8,140.4 852.3,129.0 854.7,133.8 857.2,147.1 859.7,129.5 862.2,132.5 864.6,132.7 867.1,131.9 869.6,131.4 872.1,143.2 874.5,143.7 877.0,133.3 877.0,157.7 874.5,172.4 872.1,166.5 869.6,157.2 867.1,157.5 864.6,157.3 862.2,157.5 859.7,157.5 857.2,172.3 854.7,157.5 852.3,157.5 849.8,166.3 847.3,157.4 844.8,157.4 842.4,167.5 839.9,157.5 837.4,157.4 834.9,157.3 832.5,157.4 830.0,157.3 827.5,170.7 825.0,157.5 822.6,157.5 820.1,157.4 817.6,157.3 815.1,170.5 812.7,166.6 810.2,157.6 807.7,157.4 805.2,157.2 802.8,157.2 800.3,157.3 797.8,157.4 795.4,157.7 792.9,157.8 790.4,157.3 787.9,157.7 785.5,157.2 783.0,157.3 780.5,172.2 778.0,157.6 775.6,157.4 773.1,157.4 770.6,157.8 768.1,157.5 765.7,157.2 763.2,157.7 760.7,157.2 758.2,157.3 755.8,157.6 753.3,157.6 750.8,157.5 748.3,157.3 745.9,165.7 743.4,157.6 740.9,157.7 738.4,165.3 736.0,157.2 733.5,157.4 731.0,157.3 728.6,157.4 726.1,157.7 723.6,157.4 721.1,157.2 718.7,157.7 716.2,168.4 713.7,157.4 711.2,157.4 708.8,157.5 706.3,157.4 703.8,157.5 701.3,157.7 698.9,157.8 696.4,157.4 693.9,157.2 691.4,157.6 689.0,157.6 686.5,157.3 684.0,157.3 681.5,157.6 679.1,153.8 676.6,157.6 674.1,157.3 671.6,157.5 669.2,157.6 666.7,157.8 664.2,153.5 661.7,157.3 659.3,157.6 656.8,157.7 654.3,167.6 651.9,157.7 649.4,157.4 646.9,157.5 644.4,157.6 642.0,157.5 639.5,157.3 637.0,173.1 634.5,157.4 632.1,157.7 629.6,157.6 627.1,157.4 624.6,157.5 622.2,153.1 619.7,157.2 617.2,157.4 614.7,157.4 612.3,157.6 609.8,157.8 607.3,157.3 604.8,151.1 602.4,170.4 599.9,157.4 597.4,157.2 594.9,157.6 592.5,157.6 590.0,157.7 587.5,172.4 585.0,157.7 582.6,157.6 580.1,157.2 577.6,157.3 575.2,157.2 572.7,171.8 570.2,157.5 567.7,157.2 565.3,157.8 562.8,157.2 560.3,157.6 557.8,173.4 555.4,157.3 552.9,157.8 550.4,170.2 547.9,157.7 545.5,157.5 543.0,171.0 540.5,157.7 538.0,157.5 535.6,157.3 533.1,157.6 530.6,157.3 528.1,157.7 525.7,157.5 523.2,157.4 520.7,157.3 518.2,157.7 515.8,157.7 513.3,157.8 510.8,157.7 508.3,157.6 505.9,157.3 503.4,157.6 500.9,157.7 498.5,157.3 496.0,168.3 493.5,157.7 491.0,157.2 488.6,173.5 486.1,157.6 483.6,157.3 481.1,157.3 478.7,157.7 476.2,170.1 473.7,157.6 471.2,157.8 468.8,157.2 466.3,157.2 463.8,157.5 461.3,157.8 458.9,157.7 456.4,172.6 453.9,157.4 451.4,157.7 449.0,157.7 446.5,157.4 444.0,157.7 441.5,157.4 439.1,157.3 436.6,157.5 434.1,157.4 431.7,157.4 429.2,157.2 426.7,157.5 424.2,157.2 421.8,157.4 419.3,157.7 416.8,157.2 414.3,157.6 411.9,157.7 409.4,157.3 406.9,157.5 404.4,157.6 402.0,157.4 399.5,157.3 397.0,157.5 394.5,157.3 392.1,157.4 389.6,157.7 387.1,171.3 384.6,157.3 382.2,157.6 379.7,157.6 377.2,157.3 374.7,157.4 372.3,157.6 369.8,157.5 367.3,157.3 364.8,157.3 362.4,157.2 359.9,157.2 357.4,157.6 355.0,157.7 352.5,157.4 350.0,157.4 347.5,157.4 345.1,157.5 342.6,157.2 340.1,157.2 337.6,157.6 335.2,157.6 332.7,157.4 330.2,157.6 327.7,157.2 325.3,157.7 322.8,157.3 320.3,157.4 317.8,157.5 315.4,157.6 312.9,157.4 310.4,157.7 307.9,157.3 305.5,157.5 303.0,157.4 300.5,157.3 298.0,157.2 295.6,157.2 293.1,157.8 290.6,157.6 288.1,157.7 285.7,157.8 283.2,157.4 280.7,157.7 278.3,169.4 275.8,157.3 273.3,156.0 270.8,157.6 268.4,170.1 265.9,157.5 263.4,157.2 260.9,157.3 258.5,156.4 256.0,157.6 253.5,157.5 251.0,156.4 248.6,156.4 246.1,157.4 243.6,157.6 241.1,157.3 238.7,157.2 236.2,171.5 233.7,157.7 231.2,166.0 228.8,171.8 226.3,172.8 223.8,172.7 221.3,172.0 218.9,172.1 216.4,169.6 213.9,166.0 211.4,157.2 209.0,168.2 206.5,165.2 204.0,157.5 201.6,164.1 199.1,157.7 196.6,166.1 194.1,157.4 191.7,168.9 189.2,157.5 186.7,157.6 184.2,168.7 181.8,157.3 179.3,157.8 176.8,155.1 174.3,157.3 171.9,154.9 169.4,157.5 166.9,171.9 164.4,157.7 162.0,157.2 159.5,166.6 157.0,171.9 154.5,157.4 152.1,157.4 149.6,152.3 147.1,157.2 144.6,157.5 142.2,152.5 139.7,157.3 137.2,157.4 134.8,157.5 132.3,157.2 129.8,157.4 127.3,157.4 124.9,171.7 122.4,157.4 119.9,157.4 117.4,168.8 115.0,157.7 112.5,157.3 110.0,157.5 107.5,157.6 105.1,157.3 102.6,157.2 100.1,157.2 97.6,157.7 95.2,157.7 92.7,157.3 90.2,157.3 87.7,157.5 85.3,157.2 82.8,157.7 80.3,157.2 77.8,157.5 75.4,157.5 72.9,170.6 70.4,157.8 67.9,157.7 65.5,157.4 63.0,157.5" fill="#2068a6"/>
<polygon points="63.0,157.5 65.5,157.4 67.9,157.7 70.4,157.8 72.9,170.6 75.4,157.5 77.8,157.5 80.3,157.2 82.8,157.7 85.3,157.2 87.7,157.5 90.2,157.3 92.7,157.3 95.2,157.7 97.6,157.7 100.1,157.2 102.6,157.2 105.1,157.3 107.5,157.6 110.0,157.5 112.5,157.3 115.0,157.7 117.4,168.8 119.9,157.4 122.4,157.4 124.9,171.7 127.3,157.4 129.8,157.4 132.3,157.2 134.8,157.5 137.2,157.4 139.7,157.3 142.2,152.5 144.6,157.5 147.1,157.2 149.6,152.3 152.1,157.4 154.5,157.4 157.0,171.9 159.5,166.6 162.0,157.2 164.4,157.7 166.9,171.9 169.4,157.5 171.9,154.9 174.3,157.3 176.8,155.1 179.3,157.8 181.8,157.3 184.2,168.7 186.7,157.6 189.2,157.5 191.7,168.9 194.1,157.4 196.6,166.1 199.1,157.7 201.6,164.1 204.0,157.5 206.5,165.2 209.0,168.2 211.4,157.2 213.9,166.0 216.4,169.6 218.9,172.1 221.3,172.0 223.8,172.7 226.3,172.8 228.8,171.8 231.2,166.0 233.7,157.7 236.2,171.5 238.7,157.2 241.1,157.3 243.6,157.6 246.1,157.4 248.6,156.4 251.0,156.4 253.5,157.5 256.0,157.6 258.5,156.4 260.9,157.3 263.4,157.2 265.9,157.5 268.4,170.1 270.8,157.6 273.3,156.0 275.8,157.3 278.3,169.4 280.7,157.7 283.2,157.4 285.7,157.8 288.1,157.7 290.6,157.6 293.1,157.8 295.6,157.2 298.0,157.2 300.5,157.3 303.0,157.4 305.5,157.5 307.9,157.3 310.4,157.7 312.9,157.4 315.4,157.6 317.8,157.5 320.3,157.4 322.8,157.3 325.3,157.7 327.7,157.2 330.2,157.6 332.7,157.4 335.2,157.6 337.6,157.6 340.1,157.2 342.6,157.2 345.1,157.5 347.5,157.4 350.0,157.4 352.5,157.4 355.0,157.7 357.4,157.6 359.9,157.2 362.4,157.2 364.8,157.3 367.3,157.3 369.8,157.5 372.3,157.6 374.7,157.4 377.2,157.3 379.7,157.6 382.2,157.6 384.6,157.3 387.1,171.3 389.6,157.7 392.1,157.4 394.5,157.3 397.0,157.5 399.5,157.3 402.0,157.4 404.4,157.6 406.9,157.5 409.4,157.3 411.9,157.7 414.3,157.6 416.8,157.2 419.3,157.7 421.8,157.4 424.2,157.2 426.7,157.5 429.2,157.2 431.7,157.4 434.1,157.4 436.6,157.5 439.1,157.3 441.5,157.4 444.0,157.7 446.5,157.4 449.0,157.7 451.4,157.7 453.9,157.4 456.4,172.6 458.9,157.7 461.3,157.8 463.8,157.5 466.3,157.2 468.8,157.2 471.2,157.8 473.7,157.6 476.2,170.1 478.7,157.7 481.1,157.3 483.6,157.3 486.1,157.6 488.6,173.5 491.0,157.2 493.5,157.7 496.0,168.3 498.5,157.3 500.9,157.7 503.4,157.6 505.9,157.3 508.3,157.6 510.8,157.7 513.3,157.8 515.8,157.7 518.2,157.7 520.7,157.3 523.2,157.4 525.7,157.5 528.1,157.7 530.6,157.3 533.1,157.6 535.6,157.3 538.0,157.5 540.5,157.7 543.0,171.0 545.5,157.5 547.9,157.7 550.4,170.2 552.9,157.8 555.4,157.3 557.8,173.4 560.3,157.6 562.8,157.2 565.3,157.8 567.7,157.2 570.2,157.5 572.7,171.8 575.2,157.2 577.6,157.3 580.1,157.2 582.6,157.6 585.0,157.7 587.5,172.4 590.0,157.7 592.5,157.6 594.9,157.6 597.4,157.2 599.9,157.4 602.4,170.4 604.8,151.1 607.3,157.3 609.8,157.8 612.3,157.6 614.7,157.4 617.2,157.4 619.7,157.2 622.2,153.1 624.6,157.5 627.1,157.4 629.6,157.6 632.1,157.7 634.5,157.4 637.0,173.1 639.5,157.3 642.0,157.5 644.4,157.6 646.9,157.5 649.4,157.4 651.9,157.7 654.3,167.6 656.8,157.7 659.3,157.6 661.7,157.3 664.2,153.5 666.7,157.8 669.2,157.6 671.6,157.5 674.1,157.3 676.6,157.6 679.1,153.8 681.5,157.6 684.0,157.3 686.5,157.3 689.0,157.6 691.4,157.6 693.9,157.2 696.4,157.4 698.9,157.8 701.3,157.7 703.8,157.5 706.3,157.4 708.8,157.5 711.2,157.4 713.7,157.4 716.2,168.4 718.7,157.7 721.1,157.2 723.6,157.4 726.1,157.7 728.6,157.4 731.0,157.3 733.5,157.4 736.0,157.2 738.4,165.3 740.9,157.7 743.4,157.6 745.9,165.7 748.3,157.3 750.8,157.5 753.3,157.6 755.8,157.6 758.2,157.3 760.7,157.2 763.2,157.7 765.7,157.2 768.1,157.5 770.6,157.8 773.1,157.4 775.6,157.4 778.0,157.6 780.5,172.2 783.0,157.3 785.5,157.2 787.9,157.7 790.4,157.3 792.9,157.8 795.4,157.7 797.8,157.4 800.3,157.3 802.8,157.2 805.2,157.2 807.7,157.4 810.2,157.6 812.7,166.6 815.1,170.5 817.6,157.3 820.1,157.4 822.6,157.5 825.0,157.5 827.5,170.7 830.0,157.3 832.5,157.4 834.9,157.3 837.4,157.4 839.9,157.5 842.4,167.5 844.8,157.4 847.3,157.4 849.8,166.3 852.3,157.5 854.7,157.5 857.2,172.3 859.7,157.5 862.2,157.5 864.6,157.3 867.1,157.5 869.6,157.2 872.1,166.5 874.5,172.4 877.0,157.7 877.0,177.5 63.0,177.5" fill="#bf9836"/>
<path d="M63.0 93.5 H877.0" stroke="#ffffff" stroke-opacity="0.06"/>
<path d="M63.0 135.5 H877.0" stroke="#ffffff" stroke-opacity="0.06"/>
<path d="M138.5 51.0 V177.0" stroke="#ffffff" stroke-opacity="0.06"/>
<path d="M217.5 51.0 V177.0" stroke="#ffffff" stroke-opacity="0.06"/>
<path d="M296.5 51.0 V177.0" stroke="#ffffff" stroke-opacity="0.06"/>
<path d="M375.5 51.0 V177.0" stroke="#ffffff" stroke-opacity="0.06"/>
<path d="M454.5 51.0 V177.0" stroke="#ffffff" stroke-opacity="0.06"/>
<path d="M533.5 51.0 V177.0" stroke="#ffffff" stroke-opacity="0.06"/>
<path d="M611.5 51.0 V177.0" stroke="#ffffff" stroke-opacity="0.06"/>
<path d="M690.5 51.0 V177.0" stroke="#ffffff" stroke-opacity="0.06"/>
<path d="M769.5 51.0 V177.0" stroke="#ffffff" stroke-opacity="0.06"/>
<path d="M848.5 51.0 V177.0" stroke="#ffffff" stroke-opacity="0.06"/>
<polyline points="63.0,157.5 65.5,157.4 67.9,157.7 70.4,157.8 72.9,170.6 75.4,157.5 77.8,157.5 80.3,157.2 82.8,157.7 85.3,157.2 87.7,157.5 90.2,157.3 92.7,157.3 95.2,157.7 97.6,157.7 100.1,157.2 102.6,157.2 105.1,157.3 107.5,157.6 110.0,157.5 112.5,157.3 115.0,157.7 117.4,168.8 119.9,157.4 122.4,157.4 124.9,171.7 127.3,157.4 129.8,157.4 132.3,157.2 134.8,157.5 137.2,157.4 139.7,157.3 142.2,152.5 144.6,157.5 147.1,157.2 149.6,152.3 152.1,157.4 154.5,157.4 157.0,171.9 159.5,166.6 162.0,157.2 164.4,157.7 166.9,171.9 169.4,157.5 171.9,154.9 174.3,157.3 176.8,155.1 179.3,157.8 181.8,157.3 184.2,168.7 186.7,157.6 189.2,157.5 191.7,168.9 194.1,157.4 196.6,166.1 199.1,157.7 201.6,164.1 204.0,157.5 206.5,165.2 209.0,168.2 211.4,157.2 213.9,166.0 216.4,169.6 218.9,172.1 221.3,172.0 223.8,172.7 226.3,172.8 228.8,171.8 231.2,166.0 233.7,157.7 236.2,171.5 238.7,157.2 241.1,157.3 243.6,157.6 246.1,157.4 248.6,156.4 251.0,156.4 253.5,157.5 256.0,157.6 258.5,156.4 260.9,157.3 263.4,157.2 265.9,157.5 268.4,170.1 270.8,157.6 273.3,156.0 275.8,157.3 278.3,169.4 280.7,157.7 283.2,157.4 285.7,157.8 288.1,157.7 290.6,157.6 293.1,157.8 295.6,157.2 298.0,157.2 300.5,157.3 303.0,157.4 305.5,157.5 307.9,157.3 310.4,157.7 312.9,157.4 315.4,157.6 317.8,157.5 320.3,157.4 322.8,157.3 325.3,157.7 327.7,157.2 330.2,157.6 332.7,157.4 335.2,157.6 337.6,157.6 340.1,157.2 342.6,157.2 345.1,157.5 347.5,157.4 350.0,157.4 352.5,157.4 355.0,157.7 357.4,157.6 359.9,157.2 362.4,157.2 364.8,157.3 367.3,157.3 369.8,157.5 372.3,157.6 374.7,157.4 377.2,157.3 379.7,157.6 382.2,157.6 384.6,157.3 387.1,171.3 389.6,157.7 392.1,157.4 394.5,157.3 397.0,157.5 399.5,157.3 402.0,157.4 404.4,157.6 406.9,157.5 409.4,157.3 411.9,157.7 414.3,157.6 416.8,157.2 419.3,157.7 421.8,157.4 424.2,157.2 426.7,157.5 429.2,157.2 431.7,157.4 434.1,157.4 436.6,157.5 439.1,157.3 441.5,157.4 444.0,157.7 446.5,157.4 449.0,157.7 451.4,157.7 453.9,157.4 456.4,172.6 458.9,157.7 461.3,157.8 463.8,157.5 466.3,157.2 468.8,157.2 471.2,157.8 473.7,157.6 476.2,170.1 478.7,157.7 481.1,157.3 483.6,157.3 486.1,157.6 488.6,173.5 491.0,157.2 493.5,157.7 496.0,168.3 498.5,157.3 500.9,157.7 503.4,157.6 505.9,157.3 508.3,157.6 510.8,157.7 513.3,157.8 515.8,157.7 518.2,157.7 520.7,157.3 523.2,157.4 525.7,157.5 528.1,157.7 530.6,157.3 533.1,157.6 535.6,157.3 538.0,157.5 540.5,157.7 543.0,171.0 545.5,157.5 547.9,157.7 550.4,170.2 552.9,157.8 555.4,157.3 557.8,173.4 560.3,157.6 562.8,157.2 565.3,157.8 567.7,157.2 570.2,157.5 572.7,171.8 575.2,157.2 577.6,157.3 580.1,157.2 582.6,157.6 585.0,157.7 587.5,172.4 590.0,157.7 592.5,157.6 594.9,157.6 597.4,157.2 599.9,157.4 602.4,170.4 604.8,151.1 607.3,157.3 609.8,157.8 612.3,157.6 614.7,157.4 617.2,157.4 619.7,157.2 622.2,153.1 624.6,157.5 627.1,157.4 629.6,157.6 632.1,157.7 634.5,157.4 637.0,173.1 639.5,157.3 642.0,157.5 644.4,157.6 646.9,157.5 649.4,157.4 651.9,157.7 654.3,167.6 656.8,157.7 659.3,157.6 661.7,157.3 664.2,153.5 666.7,157.8 669.2,157.6 671.6,157.5 674.1,157.3 676.6,157.6 679.1,153.8 681.5,157.6 684.0,157.3 686.5,157.3 689.0,157.6 691.4,157.6 693.9,157.2 696.4,157.4 698.9,157.8 701.3,157.7 703.8,157.5 706.3,157.4 708.8,157.5 711.2,157.4 713.7,157.4 716.2,168.4 718.7,157.7 721.1,157.2 723.6,157.4 726.1,157.7 728.6,157.4 731.0,157.3 733.5,157.4 736.0,157.2 738.4,165.3 740.9,157.7 743.4,157.6 745.9,165.7 748.3,157.3 750.8,157.5 753.3,157.6 755.8,157.6 758.2,157.3 760.7,157.2 763.2,157.7 765.7,157.2 768.1,157.5 770.6,157.8 773.1,157.4 775.6,157.4 778.0,157.6 780.5,172.2 783.0,157.3 785.5,157.2 787.9,157.7 790.4,157.3 792.9,157.8 795.4,157.7 797.8,157.4 800.3,157.3 802.8,157.2 805.2,157.2 807.7,157.4 810.2,157.6 812.7,166.6 815.1,170.5 817.6,157.3 820.1,157.4 822.6,157.5 825.0,157.5 827.5,170.7 830.0,157.3 832.5,157.4 834.9,157.3 837.4,157.4 839.9,157.5 842.4,167.5 844.8,157.4 847.3,157.4 849.8,166.3 852.3,157.5 854.7,157.5 857.2,172.3 859.7,157.5 862.2,157.5 864.6,157.3 867.1,157.5 869.6,157.2 872.1,166.5 874.5,172.4 877.0,157.7" stroke="#d98a4a" stroke-width="0.6" stroke-linejoin="round"/>
<polyline points="63.0,127.9 65.5,127.5 67.9,127.4 70.4,127.3 72.9,151.5 75.4,127.7 77.8,129.0 80.3,136.7 82.8,127.0 85.3,129.4 87.7,130.0 90.2,128.9 92.7,135.5 95.2,129.6 97.6,137.8 100.1,136.7 102.6,137.4 105.1,136.2 107.5,128.5 110.0,134.8 112.5,127.1 115.0,127.5 117.4,146.9 119.9,137.6 122.4,128.9 124.9,151.2 127.3,126.5 129.8,137.9 132.3,129.4 134.8,132.9 137.2,118.9 139.7,127.3 142.2,124.6 144.6,133.9 147.1,130.4 149.6,132.2 152.1,131.9 154.5,143.7 157.0,134.8 159.5,148.5 162.0,141.1 164.4,120.3 166.9,155.7 169.4,133.8 171.9,135.6 174.3,133.3 176.8,133.0 179.3,127.5 181.8,134.1 184.2,147.2 186.7,125.5 189.2,125.5 191.7,151.3 194.1,137.8 196.6,145.5 199.1,135.9 201.6,151.0 204.0,145.7 206.5,155.6 209.0,148.7 211.4,142.4 213.9,151.1 216.4,150.3 218.9,161.8 221.3,161.7 223.8,163.3 226.3,161.6 228.8,162.5 231.2,155.2 233.7,139.6 236.2,138.8 238.7,128.2 241.1,135.7 243.6,133.5 246.1,113.2 248.6,111.8 251.0,114.0 253.5,112.5 256.0,111.8 258.5,112.7 260.9,137.9 263.4,134.5 265.9,138.3 268.4,149.5 270.8,132.8 273.3,96.4 275.8,127.5 278.3,158.6 280.7,113.2 283.2,124.0 285.7,125.5 288.1,113.8 290.6,114.9 293.1,116.3 295.6,110.8 298.0,124.5 300.5,111.2 303.0,116.4 305.5,115.1 307.9,110.3 310.4,112.8 312.9,112.6 315.4,128.0 317.8,128.4 320.3,126.2 322.8,111.9 325.3,112.1 327.7,111.8 330.2,124.2 332.7,123.3 335.2,126.0 337.6,113.1 340.1,125.2 342.6,114.2 345.1,111.9 347.5,128.3 350.0,112.3 352.5,116.4 355.0,112.7 357.4,112.2 359.9,113.1 362.4,112.1 364.8,112.2 367.3,115.5 369.8,121.7 372.3,128.2 374.7,127.4 377.2,127.5 379.7,121.8 382.2,128.0 384.6,121.0 387.1,125.7 389.6,115.4 392.1,128.8 394.5,115.1 397.0,112.7 399.5,115.5 402.0,126.6 404.4,114.3 406.9,119.6 409.4,121.0 411.9,114.7 414.3,123.1 416.8,114.1 419.3,125.7 421.8,125.8 424.2,112.4 426.7,116.6 429.2,125.8 431.7,113.5 434.1,110.9 436.6,110.5 439.1,127.5 441.5,111.2 444.0,111.7 446.5,110.3 449.0,124.8 451.4,121.8 453.9,111.9 456.4,130.9 458.9,113.6 461.3,111.5 463.8,112.0 466.3,113.5 468.8,113.7 471.2,112.2 473.7,116.3 476.2,138.4 478.7,112.5 481.1,112.8 483.6,126.6 486.1,111.5 488.6,130.4 491.0,114.7 493.5,127.8 496.0,145.1 498.5,113.8 500.9,132.6 503.4,129.7 505.9,114.0 508.3,129.0 510.8,116.5 513.3,118.1 515.8,130.1 518.2,118.2 520.7,129.4 523.2,114.6 525.7,116.0 528.1,131.7 530.6,117.1 533.1,118.8 535.6,134.0 538.0,117.6 540.5,116.3 543.0,131.4 545.5,118.3 547.9,116.0 550.4,130.6 552.9,130.9 555.4,90.1 557.8,130.2 560.3,117.7 562.8,113.8 565.3,129.1 567.7,127.0 570.2,130.6 572.7,131.7 575.2,133.4 577.6,53.9 580.1,80.5 582.6,93.5 585.0,99.7 587.5,115.6 590.0,101.7 592.5,98.9 594.9,93.3 597.4,73.7 599.9,90.9 602.4,112.3 604.8,115.2 607.3,121.5 609.8,97.9 612.3,95.4 614.7,70.6 617.2,77.2 619.7,126.5 622.2,95.6 624.6,73.1 627.1,68.0 629.6,65.6 632.1,95.0 634.5,80.8 637.0,99.3 639.5,102.5 642.0,77.8 644.4,66.1 646.9,95.1 649.4,89.8 651.9,76.0 654.3,108.1 656.8,81.1 659.3,69.7 661.7,74.5 664.2,86.6 666.7,101.9 669.2,113.6 671.6,78.2 674.1,78.3 676.6,68.7 679.1,102.3 681.5,103.5 684.0,66.4 686.5,80.4 689.0,83.8 691.4,92.8 693.9,100.6 696.4,104.7 698.9,74.8 701.3,80.6 703.8,101.8 706.3,120.8 708.8,73.7 711.2,87.8 713.7,74.0 716.2,84.1 718.7,68.3 721.1,107.5 723.6,68.3 726.1,67.2 728.6,100.4 731.0,73.3 733.5,122.5 736.0,94.4 738.4,81.7 740.9,101.6 743.4,101.4 745.9,83.4 748.3,97.4 750.8,74.8 753.3,79.9 755.8,66.2 758.2,100.1 760.7,73.0 763.2,79.2 765.7,93.1 768.1,66.6 770.6,95.9 773.1,67.3 775.6,98.1 778.0,81.9 780.5,106.8 783.0,84.4 785.5,80.0 787.9,80.8 790.4,58.6 792.9,67.4 795.4,71.1 797.8,79.6 800.3,94.8 802.8,115.1 805.2,61.6 807.7,62.0 810.2,68.7 812.7,103.4 815.1,107.0 817.6,58.6 820.1,113.8 822.6,118.2 825.0,109.5 827.5,160.6 830.0,128.7 832.5,110.2 834.9,107.8 837.4,108.1 839.9,108.3 842.4,122.8 844.8,126.3 847.3,109.4 849.8,120.0 852.3,104.7 854.7,128.9 857.2,122.0 859.7,106.3 862.2,129.5 864.6,112.0 867.1,106.6 869.6,125.4 872.1,117.2 874.5,117.1 877.0,111.5" stroke="#c3d4b4" stroke-width="1.5" stroke-linejoin="round"/>
<path d="M63 177.3 H877" stroke="#7d9a4a" stroke-width="0.8"/>
</svg>
</section>
<div id="gscroll"></div>
</main>
<div id="winline"></div><div id="winright"></div><div id="winthumb"></div>
</body></html>
